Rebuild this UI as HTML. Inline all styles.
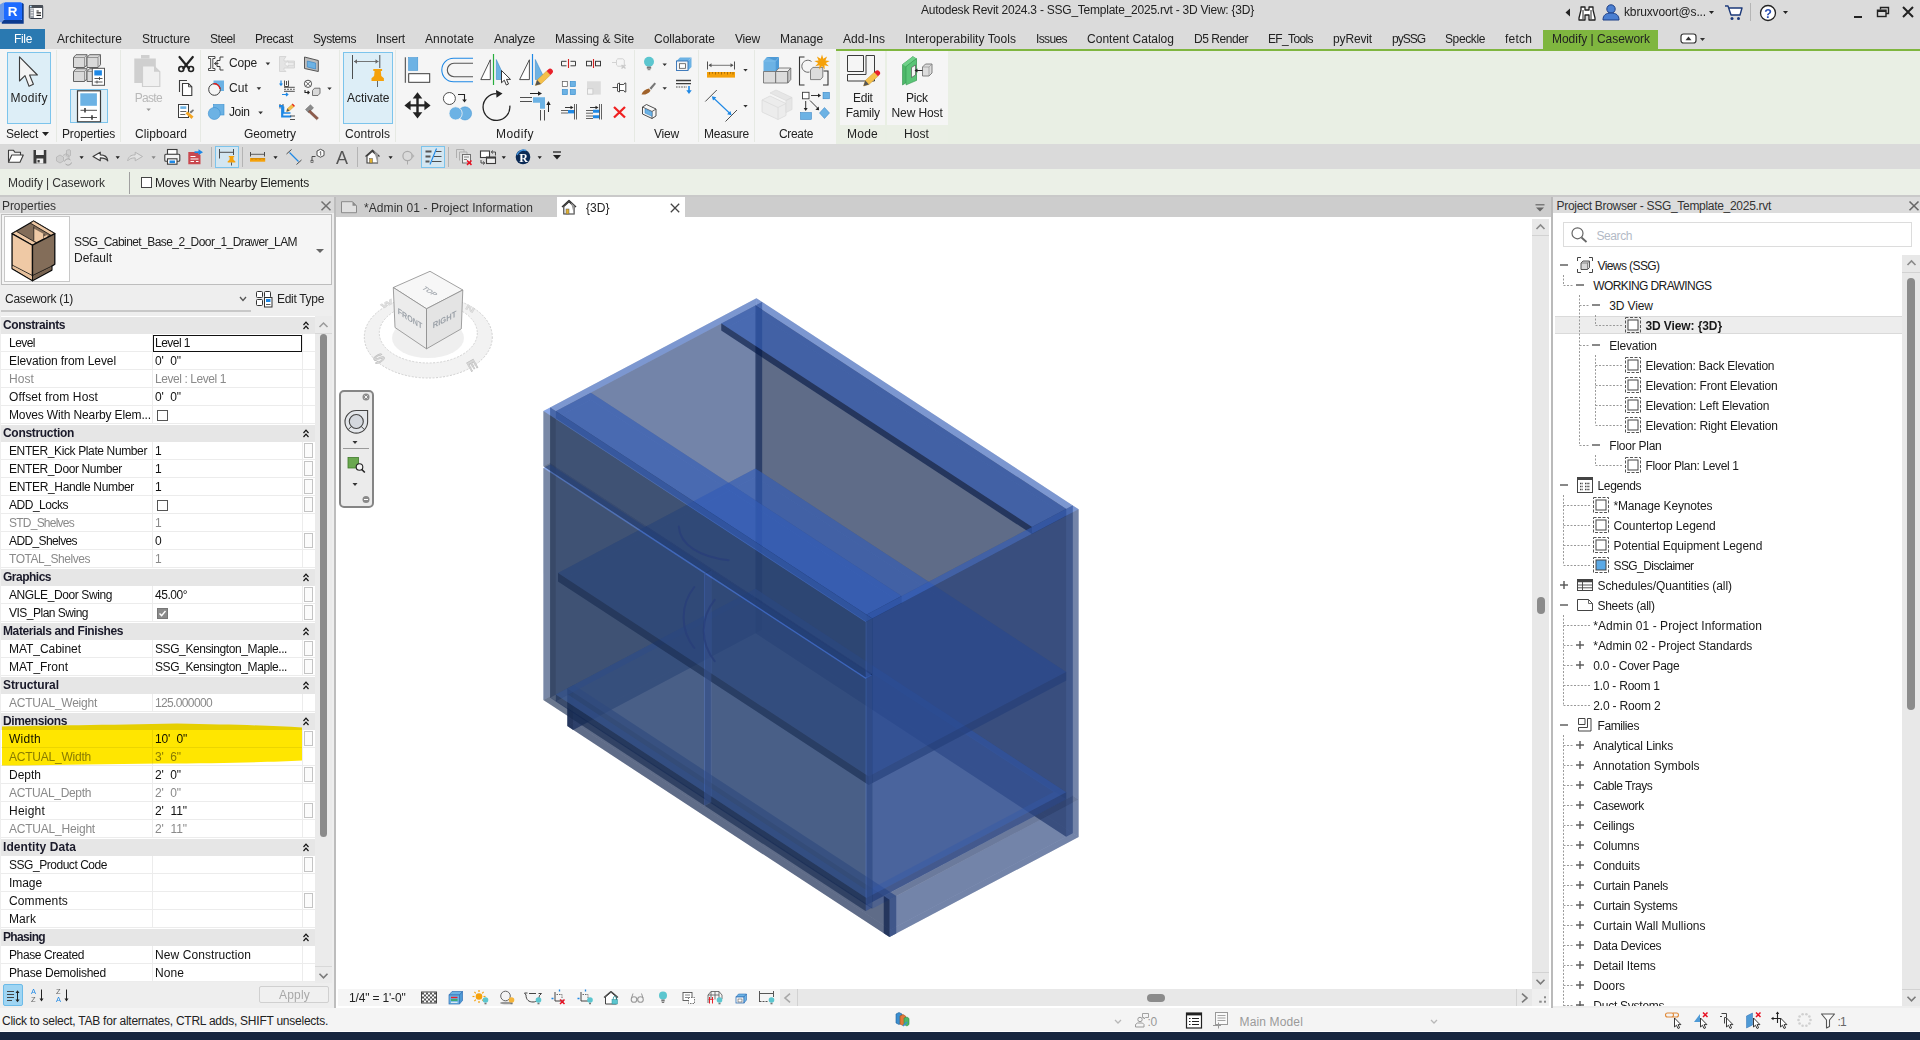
<!DOCTYPE html><html><head><meta charset="utf-8"><title>Autodesk Revit 2024.3</title><style>
html,body{margin:0;padding:0}
body{width:1920px;height:1040px;overflow:hidden;position:relative;background:#fff;font-family:"Liberation Sans",sans-serif;font-size:12px;color:#222}
body>div,body>span,body>svg{position:absolute}
.t{white-space:pre;line-height:16px;height:16px}
svg{overflow:visible}
#t1{letter-spacing:-0.235px}#t2{letter-spacing:-0.148px}#t3{letter-spacing:-0.336px}#t4{letter-spacing:0.081px}#t5{letter-spacing:-0.076px}#t6{letter-spacing:-0.472px}#t7{letter-spacing:-0.384px}#t8{letter-spacing:-0.431px}#t9{letter-spacing:-0.169px}#t10{letter-spacing:0.119px}#t11{letter-spacing:-0.243px}#t12{letter-spacing:-0.075px}#t13{letter-spacing:-0.034px}#t14{letter-spacing:-0.199px}#t15{letter-spacing:-0.062px}#t16{letter-spacing:0.092px}#t17{letter-spacing:0.053px}#t18{letter-spacing:-0.615px}#t19{letter-spacing:0.018px}#t20{letter-spacing:-0.448px}#t21{letter-spacing:-0.629px}#t22{letter-spacing:-0.145px}#t23{letter-spacing:-1.003px}#t24{letter-spacing:-0.386px}#t25{letter-spacing:0.197px}#t26{letter-spacing:-0.028px}#t27{letter-spacing:-0.227px}#t28{letter-spacing:-0.170px}#t29{letter-spacing:0.069px}#t30{letter-spacing:-0.086px}#t31{letter-spacing:0.039px}#t32{letter-spacing:0.443px}#t33{letter-spacing:-0.199px}#t34{letter-spacing:-0.241px}#t35{letter-spacing:-0.339px}#t36{letter-spacing:0.242px}#t37{letter-spacing:0.078px}#t38{letter-spacing:-0.087px}#t39{letter-spacing:-0.156px}#t40{letter-spacing:0.359px}#t41{letter-spacing:-0.677px}#t42{letter-spacing:-0.172px}#t43{letter-spacing:0.104px}#t44{letter-spacing:-0.379px}#t45{letter-spacing:-0.023px}#t46{letter-spacing:-0.247px}#t47{letter-spacing:-0.224px}#t48{letter-spacing:-0.243px}#t49{letter-spacing:-0.102px}#t50{letter-spacing:-0.070px}#t51{letter-spacing:-0.569px}#t52{letter-spacing:-0.004px}#t53{letter-spacing:-0.280px}#t54{letter-spacing:-0.312px}#t55{letter-spacing:-0.426px}#t56{letter-spacing:-0.537px}#t57{letter-spacing:-0.529px}#t58{letter-spacing:-0.087px}#t59{letter-spacing:-0.096px}#t60{letter-spacing:0.078px}#t61{letter-spacing:-0.426px}#t62{letter-spacing:0.116px}#t63{letter-spacing:-0.096px}#t64{letter-spacing:-0.135px}#t65{letter-spacing:-0.306px}#t66{letter-spacing:-0.379px}#t68{letter-spacing:-0.375px}#t70{letter-spacing:-0.336px}#t72{letter-spacing:-0.484px}#t73{letter-spacing:-0.761px}#t75{letter-spacing:-0.609px}#t77{letter-spacing:-0.457px}#t79{letter-spacing:-0.504px}#t80{letter-spacing:-0.399px}#t81{letter-spacing:-0.471px}#t82{letter-spacing:-0.504px}#t83{letter-spacing:-0.396px}#t84{letter-spacing:-0.044px}#t85{letter-spacing:-0.410px}#t86{letter-spacing:-0.014px}#t87{letter-spacing:-0.410px}#t88{letter-spacing:-0.069px}#t89{letter-spacing:-0.243px}#t90{letter-spacing:-0.641px}#t91{letter-spacing:-0.402px}#t92{letter-spacing:0.263px}#t93{letter-spacing:-0.179px}#t94{letter-spacing:-0.225px}#t95{letter-spacing:-0.096px}#t96{letter-spacing:-0.006px}#t97{letter-spacing:-0.096px}#t98{letter-spacing:-0.337px}#t99{letter-spacing:-0.096px}#t100{letter-spacing:0.219px}#t101{letter-spacing:-0.051px}#t102{letter-spacing:-0.209px}#t103{letter-spacing:-0.051px}#t104{letter-spacing:0.076px}#t105{letter-spacing:-0.463px}#t106{letter-spacing:-0.072px}#t107{letter-spacing:0.123px}#t108{letter-spacing:0.082px}#t109{letter-spacing:-0.670px}#t110{letter-spacing:-0.389px}#t111{letter-spacing:0.080px}#t112{letter-spacing:-0.233px}#t113{letter-spacing:0.078px}#t114{letter-spacing:0.194px}#t115{letter-spacing:0.073px}#t116{letter-spacing:0.035px}#t117{letter-spacing:-0.168px}#t118{letter-spacing:-0.298px}#t119{letter-spacing:-0.422px}#t120{letter-spacing:-0.588px}#t121{letter-spacing:-0.598px}#t122{letter-spacing:-0.153px}#t123{letter-spacing:-0.101px}#t124{letter-spacing:-0.208px}#t125{letter-spacing:-0.267px}#t126{letter-spacing:-0.183px}#t127{letter-spacing:-0.200px}#t128{letter-spacing:-0.175px}#t129{letter-spacing:-0.250px}#t130{letter-spacing:-0.372px}#t131{letter-spacing:-0.328px}#t132{letter-spacing:-0.166px}#t133{letter-spacing:-0.032px}#t134{letter-spacing:-0.078px}#t135{letter-spacing:-0.574px}#t136{letter-spacing:-0.090px}#t137{letter-spacing:-0.292px}#t138{letter-spacing:0.065px}#t139{letter-spacing:-0.084px}#t140{letter-spacing:-0.295px}#t141{letter-spacing:-0.240px}#t142{letter-spacing:-0.181px}#t143{letter-spacing:-0.396px}#t144{letter-spacing:-0.189px}#t145{letter-spacing:-0.027px}#t146{letter-spacing:-0.457px}#t147{letter-spacing:-0.357px}#t148{letter-spacing:-0.211px}#t149{letter-spacing:-0.194px}#t150{letter-spacing:-0.078px}#t151{letter-spacing:-0.283px}#t152{letter-spacing:-0.252px}#t153{letter-spacing:-0.001px}#t154{letter-spacing:-0.281px}#t155{letter-spacing:-0.072px}#t156{letter-spacing:-0.053px}#t157{letter-spacing:-0.251px}#t158{letter-spacing:-0.245px}#t159{letter-spacing:-0.258px}#t160{letter-spacing:0.147px}#t161{letter-spacing:-0.758px}</style></head><body>
<div style="left:0px;top:0px;width:1920px;height:49px;background:#dbdbdb;"></div>
<div style="left:0px;top:49px;width:836px;height:95px;background:#f5f5f5;"></div>
<div style="left:836px;top:49px;width:1084px;height:95px;background:#e9efe4;"></div>
<div style="left:836px;top:49px;width:1084px;height:2px;background:#7fb63f;"></div>
<div style="left:0px;top:144px;width:1920px;height:25px;background:#dadada;"></div>
<div style="left:0px;top:169px;width:1920px;height:27px;background:#ebf0e7;"></div>
<div style="left:0px;top:195px;width:1920px;height:2px;background:#c9c9c9;"></div>
<svg style="left:0px;top:0px;" width="24" height="25" viewBox="0 0 24 25"><path d="M0 4.500L3.800 2.300V20L1.800 22.200H0Z" fill="#6f9ce8"/><path d="M1.800 22.200L3.800 20H22V2.800L23.700 4V23.700H1.800Z" fill="#0b3a8f"/><rect x="3.800" y="2.200" width="18.300" height="17.800" rx="1.500" fill="#1e6bff"/><text x="12.700" y="15.800" font-family="Liberation Sans,sans-serif" font-weight="bold" font-size="13.500" text-anchor="middle" fill="#fff">R</text></svg>
<svg style="left:28px;top:4px;" width="16" height="16" viewBox="0 0 16 16"><rect x="1.300" y="1.500" width="13.400" height="13" rx="1.200" fill="#fff" stroke="#333a45" stroke-width="1"/><rect x="1" y="1.200" width="14" height="2.800" fill="#4a5058"/><rect x="2" y="1.800" width="1.600" height="1.500" fill="#bfe4ff"/><rect x="2" y="4.500" width="4" height="9.500" fill="#9aa0a8"/><path d="M2.700 6.200h2.600M2.700 8.700h2.600M2.700 11.200h2.600" stroke="#fff" stroke-width="0.900"/><path d="M8.500 7h2.200M8.500 8.900h4.500M8.500 11.300h4.500" stroke="#222" stroke-width="1.200"/></svg>
<span class="t" id="t1" style="left:921px;top:2px;color:#222;">Autodesk Revit 2024.3 - SSG_Template_2025.rvt - 3D View: {3D}</span>
<svg style="left:1565px;top:8px;" width="6" height="9" viewBox="0 0 6 9"><path d="M5 0.5V8.5L0.5 4.5Z" fill="#222"/></svg>
<svg style="left:1578px;top:4px;" width="18" height="17" viewBox="0 0 18 17"><path d="M3 3h4v3h4V3h4v3l2 8v2h-6v-5H7v5H1v-2l2-8z" fill="#fff" stroke="#222" stroke-width="1.3" stroke-linejoin="round"/><path d="M5 6v9M13 6v9" stroke="#222" stroke-width="1"/></svg>
<svg style="left:1602px;top:3px;" width="18" height="18" viewBox="0 0 18 18"><circle cx="9" cy="6" r="4.2" fill="#4b7fd1" stroke="#1d3f86" stroke-width="1"/><path d="M1 17c0-5 3-7 8-7s8 2 8 7z" fill="#4b7fd1" stroke="#1d3f86" stroke-width="1"/></svg>
<span class="t" id="t2" style="left:1624px;top:4px;color:#222;">kbruxvoort@s...</span>
<svg style="left:1709px;top:11px" width="5" height="3" viewBox="0 0 5 3"><path d="M0 0H5L2.5 3Z" fill="#222"/></svg>
<svg style="left:1724px;top:4px;" width="19" height="17" viewBox="0 0 19 17"><path d="M1 2h3l3 9h9l2-7H5" fill="#fff" stroke="#1d3a7a" stroke-width="1.4" stroke-linejoin="round"/><circle cx="8" cy="14.5" r="1.5" fill="#1d3a7a"/><circle cx="14.5" cy="14.5" r="1.5" fill="#1d3a7a"/></svg>
<div style="left:1750px;top:3px;width:1px;height:18px;background:#b5b5b5;"></div>
<svg style="left:1759px;top:4px;" width="18" height="18" viewBox="0 0 18 18"><circle cx="9" cy="9" r="7.5" fill="#fff" stroke="#222" stroke-width="1.3"/><text x="9" y="13.5" font-family="Liberation Sans,sans-serif" font-weight="bold" font-size="12.5" text-anchor="middle" fill="#2a4fb3">?</text></svg>
<svg style="left:1783px;top:11px" width="5" height="3" viewBox="0 0 5 3"><path d="M0 0H5L2.5 3Z" fill="#222"/></svg>
<div style="left:1854px;top:16px;width:8px;height:2px;background:#222;"></div>
<svg style="left:1876px;top:6px;" width="14" height="12" viewBox="0 0 14 12"><path d="M4.5 3.5V1.5H12.5V7.5H10" fill="none" stroke="#222" stroke-width="1.4"/><rect x="1.5" y="4.2" width="8.5" height="6.3" fill="none" stroke="#222" stroke-width="1.4"/><path d="M1.5 5.2h8.5" stroke="#222" stroke-width="1.6"/></svg>
<svg style="left:1902px;top:6px;" width="12" height="12" viewBox="0 0 12 12"><path d="M1 1L11 11M11 1L1 11" stroke="#222" stroke-width="2"/></svg>
<div style="left:0px;top:29px;width:45px;height:20px;background:#2a79b1;"></div>
<span class="t" id="t3" style="left:14px;top:30.5px;color:#fff;">File</span>
<span class="t" id="t4" style="left:57px;top:30.5px;color:#222;">Architecture</span>
<span class="t" id="t5" style="left:142px;top:30.5px;color:#222;">Structure</span>
<span class="t" id="t6" style="left:210px;top:30.5px;color:#222;">Steel</span>
<span class="t" id="t7" style="left:255px;top:30.5px;color:#222;">Precast</span>
<span class="t" id="t8" style="left:313px;top:30.5px;color:#222;">Systems</span>
<span class="t" id="t9" style="left:376px;top:30.5px;color:#222;">Insert</span>
<span class="t" id="t10" style="left:425px;top:30.5px;color:#222;">Annotate</span>
<span class="t" id="t11" style="left:494px;top:30.5px;color:#222;">Analyze</span>
<span class="t" id="t12" style="left:555px;top:30.5px;color:#222;">Massing &amp; Site</span>
<span class="t" id="t13" style="left:654px;top:30.5px;color:#222;">Collaborate</span>
<span class="t" id="t14" style="left:735px;top:30.5px;color:#222;">View</span>
<span class="t" id="t15" style="left:780px;top:30.5px;color:#222;">Manage</span>
<span class="t" id="t16" style="left:843px;top:30.5px;color:#222;">Add-Ins</span>
<span class="t" id="t17" style="left:905px;top:30.5px;color:#222;">Interoperability Tools</span>
<span class="t" id="t18" style="left:1036px;top:30.5px;color:#222;">Issues</span>
<span class="t" id="t19" style="left:1087px;top:30.5px;color:#222;">Content Catalog</span>
<span class="t" id="t20" style="left:1194px;top:30.5px;color:#222;">D5 Render</span>
<span class="t" id="t21" style="left:1268px;top:30.5px;color:#222;">EF_Tools</span>
<span class="t" id="t22" style="left:1333px;top:30.5px;color:#222;">pyRevit</span>
<span class="t" id="t23" style="left:1392px;top:30.5px;color:#222;">pySSG</span>
<span class="t" id="t24" style="left:1445px;top:30.5px;color:#222;">Speckle</span>
<span class="t" id="t25" style="left:1505px;top:30.5px;color:#222;">fetch</span>
<div style="left:1543px;top:30px;width:115px;height:20px;background:#7fb63f;"></div>
<span class="t" id="t26" style="left:1552px;top:30.5px;color:#222;">Modify | Casework</span>
<svg style="left:1680px;top:33px;" width="17" height="11" viewBox="0 0 17 11"><rect x="1" y="1" width="15" height="9" rx="2.5" fill="#fff" stroke="#333" stroke-width="1.2"/><path d="M5.5 7.2h6L8.5 3.6z" fill="#333"/></svg>
<svg style="left:1700px;top:38px" width="5" height="3" viewBox="0 0 5 3"><path d="M0 0H5L2.5 3Z" fill="#333"/></svg>
<div style="left:56px;top:50px;width:1px;height:92px;background:#e6e9e3;"></div>
<div style="left:120px;top:50px;width:1px;height:92px;background:#e6e9e3;"></div>
<div style="left:200px;top:50px;width:1px;height:92px;background:#e6e9e3;"></div>
<div style="left:339px;top:50px;width:1px;height:92px;background:#e6e9e3;"></div>
<div style="left:395px;top:50px;width:1px;height:92px;background:#e6e9e3;"></div>
<div style="left:634px;top:50px;width:1px;height:92px;background:#e6e9e3;"></div>
<div style="left:698px;top:50px;width:1px;height:92px;background:#e6e9e3;"></div>
<div style="left:754px;top:50px;width:1px;height:92px;background:#e6e9e3;"></div>
<div style="left:840px;top:51px;width:45px;height:74px;background:#f5f5f5;"></div>
<div style="left:840px;top:125px;width:45px;height:18px;background:#eaefe5;"></div>
<div style="left:887px;top:51px;width:60.5px;height:74px;background:#f5f5f5;"></div>
<div style="left:887px;top:125px;width:60.5px;height:18px;background:#eaefe5;"></div>
<span class="t" id="t27" style="left:6px;top:125.5px;color:#222;">Select</span>
<span class="t" id="t28" style="left:62px;top:125.5px;color:#222;">Properties</span>
<span class="t" id="t29" style="left:135px;top:125.5px;color:#222;">Clipboard</span>
<span class="t" id="t30" style="left:244px;top:125.5px;color:#222;">Geometry</span>
<span class="t" id="t31" style="left:345px;top:125.5px;color:#222;">Controls</span>
<span class="t" id="t32" style="left:496px;top:125.5px;color:#222;">Modify</span>
<span class="t" id="t33" style="left:654px;top:125.5px;color:#222;">View</span>
<span class="t" id="t34" style="left:704px;top:125.5px;color:#222;">Measure</span>
<span class="t" id="t35" style="left:779px;top:125.5px;color:#222;">Create</span>
<span class="t" id="t36" style="left:847px;top:125.5px;color:#222;">Mode</span>
<span class="t" id="t37" style="left:904px;top:125.5px;color:#222;">Host</span>
<svg style="left:42px;top:132px" width="7" height="4" viewBox="0 0 7 4"><path d="M0 0H7L3.5 4Z" fill="#222"/></svg>
<span class="t" id="t38" style="left:8px;top:174.5px;color:#333;">Modify | Casework</span>
<div style="left:129px;top:172px;width:1px;height:22px;background:#a0a0a0;"></div>
<div style="left:141px;top:177px;width:11px;height:11px;background:#fff;border:1px solid #444;box-sizing:border-box;"></div>
<span class="t" id="t39" style="left:155px;top:174.5px;color:#222;">Moves With Nearby Elements</span>
<div style="left:7px;top:52px;width:44px;height:72px;background:#ddeef7;border:1px solid #7cc4ec;box-sizing:border-box;"></div>
<div style="left:70px;top:89px;width:38px;height:34px;background:#ddeef7;border:1px solid #7cc4ec;box-sizing:border-box;"></div>
<div style="left:343px;top:52px;width:50px;height:72px;background:#ddeef7;border:1px solid #7cc4ec;box-sizing:border-box;"></div>
<svg style="left:0px;top:50px;" width="1920" height="95" viewBox="0 50 1920 95"><path d="M19.5 56.8V81L25 75.6L29 86.3L33.4 84.3L29.6 75H37.4Z" fill="#f4f4f4" stroke="#3c3c3c" stroke-width="1.1" stroke-linejoin="round"/><path d="M73.5 57.5l2.5-2.8h11v10l-2.5 2.8h-11z" fill="#d9d9d9" stroke="#555" stroke-width="0.9" stroke-linejoin="round"/><path d="M73.5 57.5h11v10M84.5 57.5l2.5-2.8" fill="none" stroke="#777" stroke-width="0.7"/><path d="M87 57.5l2.5-2.8h11v10l-2.5 2.8h-11z" fill="#d9d9d9" stroke="#555" stroke-width="0.9" stroke-linejoin="round"/><path d="M87 57.5h11v10M98 57.5l2.5-2.8" fill="none" stroke="#777" stroke-width="0.7"/><path d="M73.5 71.5l2.5-2.8h11v10l-2.5 2.8h-11z" fill="#d9d9d9" stroke="#555" stroke-width="0.9" stroke-linejoin="round"/><path d="M73.5 71.5h11v10M84.5 71.5l2.5-2.8" fill="none" stroke="#777" stroke-width="0.7"/><path d="M87 71.5l2.5-2.8h11v10l-2.5 2.8h-11z" fill="#d9d9d9" stroke="#555" stroke-width="0.9" stroke-linejoin="round"/><path d="M87 71.5h11v10M98 71.5l2.5-2.8" fill="none" stroke="#777" stroke-width="0.7"/><rect x="92.3" y="68.3" width="12.2" height="17" fill="#fff" stroke="#555" stroke-width="1"/><rect x="94.3" y="70.3" width="7.6" height="5.2" fill="#1e88e5"/><path d="M94.5 78.5h8M94.5 82h8M99.5 77v3M97 80.5v3" stroke="#444" stroke-width="0.9"/><rect x="77.5" y="90.8" width="23" height="31" fill="#fff" stroke="#3c3c3c" stroke-width="1.2"/><rect x="80.3" y="93.3" width="16.6" height="12.5" fill="#6cb2e4"/><path d="M80.5 110.3h16.5M80.5 117.5h16.5" stroke="#3c3c3c" stroke-width="0.9"/><path d="M85 108v4.6M92 115.2v4.6" stroke="#3c3c3c" stroke-width="1.6"/><path d="M134.3 58.5h21.5v24.5h-21.5z" fill="#cfcfcf"/><path d="M141 55h8.5v3.5h-8.5z" fill="#cfcfcf"/><path d="M142.5 66h11.5l5.8 5.8V86.5h-17.3z" fill="#f0f0f0" stroke="#cfcfcf" stroke-width="1.2"/><path d="M154 66v5.8h5.8z" fill="#cfcfcf"/><path d="M146.4 108.4h4.4l-2.2 2.6z" fill="#9a9a9a"/><path d="M179.5 57l9.5 11.5M192.8 57l-9.5 11.5" stroke="#222" stroke-width="2.2" stroke-linecap="round"/><circle cx="181.3" cy="69" r="2.5" fill="none" stroke="#222" stroke-width="1.6"/><circle cx="191" cy="69" r="2.5" fill="none" stroke="#222" stroke-width="1.6"/><path d="M179.5 92V80.5h7.5" fill="none" stroke="#3c3c3c" stroke-width="1.1"/><path d="M182.5 83.5h6l3.3 3.3V95.5h-9.3z" fill="#fff" stroke="#3c3c3c" stroke-width="1.1"/><path d="M188.5 83.5v3.3h3.3" fill="none" stroke="#3c3c3c" stroke-width="0.9"/><rect x="178.5" y="104.5" width="10" height="13" fill="#fff" stroke="#3c3c3c" stroke-width="1"/><rect x="180.3" y="106.3" width="6" height="2.6" fill="#6cb2e4"/><path d="M180.3 111.5h6M180.3 114.5h5" stroke="#3c3c3c" stroke-width="0.8"/><path d="M185.5 113.5l6 5.5 2-2.4-6-5z" fill="#f5a623"/><path d="M189.5 112l3.5-2.8 1 1.2-3 3z" fill="#777"/><path d="M208.5 56.5h6.5v2h-2.2v10h2.2v2h-6.5v-2h2.2v-10h-2.2z" fill="#fff" stroke="#3c3c3c" stroke-width="0.9"/><path d="M223.5 57h-3.5v3.5h-3v6h3V70h3.5" fill="none" stroke="#3c3c3c" stroke-width="1"/><path d="M214.5 63.5h4M216.2 62l-1.8 1.5 1.8 1.5" fill="none" stroke="#3c3c3c" stroke-width="0.9"/><rect x="213.5" y="80.5" width="10.5" height="10.5" fill="#6cb2e4"/><circle cx="214.5" cy="89.5" r="5.8" fill="#f5f5f5" stroke="#3c3c3c" stroke-width="1"/><path d="M213.5 83.8a5.8 5.8 0 0 1 6.5 5" fill="none" stroke="#e02020" stroke-width="1.4"/><rect x="213.5" y="104.5" width="10.5" height="10.5" fill="#6cb2e4" stroke="#3a8fd0" stroke-width="0.6"/><circle cx="214.3" cy="113.5" r="6" fill="#6cb2e4" stroke="#3a8fd0" stroke-width="0.6"/><path d="M279.5 56.5h6.5l-2 3v1.5h10.5v7H284v1.5l2 2h-6.5z" fill="#e4e4e4" stroke="#d0d0d0" stroke-width="0.8"/><path d="M284.5 64l3.5-3.2v2h6v2.4h-6v2z" fill="#f5f5f5" stroke="#d0d0d0" stroke-width="0.8"/><path d="M304.5 57l13.8 3.5v11L304.5 68.5z" fill="#bdbdbd" stroke="#555" stroke-width="1" stroke-linejoin="round"/><path d="M307.3 61l8.3 2v6l-8.3-2z" fill="#6cb2e4" stroke="#2f7fc2" stroke-width="0.6"/><path d="M281 80.5v4.5M279.6 83.5l1.4 1.8 1.4-1.8" fill="none" stroke="#1e88e5" stroke-width="1.2"/><path d="M284.5 80.5v6h4v-6M286.5 81v4" fill="none" stroke="#3c3c3c" stroke-width="0.9"/><path d="M284 87.3h10.8M284 91.3h10.8" stroke="#3c3c3c" stroke-width="0.9"/><path d="M284 89.3h10.8" stroke="#3c3c3c" stroke-width="0.8" stroke-dasharray="2 1"/><path d="M282 94.5h5.5M286 93l1.8 1.5-1.8 1.5" fill="none" stroke="#1e88e5" stroke-width="1.2"/><circle cx="308" cy="83.8" r="3.6" fill="#fff" stroke="#3c3c3c" stroke-width="0.9"/><path d="M305.6 81.4l4.8 4.8M310.4 81.4l-4.8 4.8" stroke="#3c3c3c" stroke-width="0.8"/><path d="M305 90v2.5h4M307.6 91l1.6 1.5-1.6 1.5" fill="none" stroke="#222" stroke-width="1.1"/><path d="M312.5 90.5l2-2.3h5.5v5l-2 2.3h-5.5z" fill="#d9d9d9" stroke="#555" stroke-width="0.8"/><path d="M327.3 87.4h4.4l-2.2 2.6z" fill="#333"/><path d="M280 104v4.5M283 104v4.5" stroke="#3c3c3c" stroke-width="0.9"/><path d="M279 106h3.2v10.5h9" fill="none" stroke="#1e88e5" stroke-width="2.2"/><path d="M283.5 106.5v6.5h7" fill="none" stroke="#1e88e5" stroke-width="1.6"/><path d="M290 116h5M290 119.5h5" stroke="#3c3c3c" stroke-width="0.9"/><path d="M286.5 111.5l1-3 5.2-4.7 2 2.2-5.2 4.7z" fill="#f5c04a" stroke="#c58a1a" stroke-width="0.4"/><path d="M291.8 104.6l1-0.9 2 2.2-1 0.9z" fill="#e8202a"/><path d="M286.5 111.5l1-3 2 2.2z" fill="#555"/><path d="M305.5 109.5l5-4.8 3 3.2-5 4.8z" fill="#8a8a8a" stroke="#666" stroke-width="0.5"/><path d="M310 110l8.5 8-1.8 1.8-8.5-8z" fill="#8d5a4a" stroke="#6a3f33" stroke-width="0.4"/><path d="M265.6 62.5h4.6l-2.3 2.7z" fill="#333"/><path d="M256.6 87.2h4.6l-2.3 2.7z" fill="#333"/><path d="M258.3 111.5h4.6l-2.3 2.7z" fill="#333"/><path d="M352.5 55v24M379.8 55v13" stroke="#3c3c3c" stroke-width="0.9"/><path d="M354 61.5h24.5" stroke="#666" stroke-width="0.9"/><path d="M357 59.3l-3 2.2 3 2.2zM375.5 59.3l3 2.2-3 2.2z" fill="#666"/><path d="M373.3 69h8.8v2h-1.3l0.5 5 2.6 2.3v2.7h-12.4v-2.7l2.6-2.3 0.5-5h-1.3z" fill="#f5a10a"/><path d="M377.5 81v6" stroke="#555" stroke-width="0.9"/><path d="M405.3 57.3v25.5" stroke="#3c3c3c" stroke-width="1"/><rect x="408.5" y="57.5" width="9.3" height="13" fill="#6cb2e4" stroke="#3a8fd0" stroke-width="0.5"/><rect x="408.7" y="73.7" width="21" height="8.6" fill="#fff" stroke="#3c3c3c" stroke-width="1"/><path d="M473 58.3h-19.5a11.7 11.7 0 0 0 0 23.4H473" fill="none" stroke="#1e88e5" stroke-width="1.1"/><path d="M473 63.3h-19a6.7 6.7 0 0 0 0 13.4H473" fill="none" stroke="#555" stroke-width="1.1"/><path d="M490.3 59.8v19.8h-9.5z" fill="#fff" stroke="#3c3c3c" stroke-width="0.9" stroke-linejoin="round"/><path d="M493.5 54v31" stroke="#27ae3c" stroke-width="1.2"/><path d="M496.3 59.5v20h9.3z" fill="#6cb2e4" stroke="#2f7fc2" stroke-width="0.5"/><path d="M501.5 70.5v12.3l2.8-2.6 2 4.8 2.2-1-2-4.6h4z" fill="#fff" stroke="#222" stroke-width="0.9" stroke-linejoin="round"/><path d="M529.4 59.8v19.8h-9.8z" fill="#fff" stroke="#3c3c3c" stroke-width="0.9" stroke-linejoin="round"/><path d="M532.5 54v31" stroke="#1e88e5" stroke-width="1.2"/><path d="M535.3 59.5v20h9.7z" fill="#6cb2e4" stroke="#2f7fc2" stroke-width="0.5"/><path d="M535.3 85.5l1.8-5.5 9.5-9 3.8 4-9.5 9z" fill="#f5c04a" stroke="#c58a1a" stroke-width="0.4"/><path d="M546.6 71l1.6-1.5a2.7 2.7 0 0 1 3.8 4l-1.6 1.5z" fill="#e8202a"/><path d="M535.3 85.5l1.8-5.5 3.8 4z" fill="#555"/><path d="M417.5 92.3l4.8 6.2h-3.6v5.7h5.7v-3.6l6.2 4.8-6.2 4.8v-3.6h-5.7v5.7h3.6l-4.8 6.2-4.8-6.2h3.6v-5.7h-5.7v3.6l-6.2-4.8 6.2-4.8v3.6h5.7v-5.7h-3.6z" fill="#222"/><circle cx="449.4" cy="98.5" r="6" fill="#fff" stroke="#3c3c3c" stroke-width="0.9"/><path d="M458 94.5h6.5v6" fill="none" stroke="#222" stroke-width="1.1"/><path d="M462.2 99.5h4.6l-2.3 3z" fill="#222"/><circle cx="465" cy="113.4" r="6.6" fill="#6cb2e4" stroke="#3a8fd0" stroke-width="0.5"/><circle cx="455.6" cy="113.4" r="6.6" fill="#6cb2e4" stroke="#f5f5f5" stroke-width="0.8"/><path d="M496.5 93.6a13.4 13.4 0 1 0 13.3 12" fill="none" stroke="#222" stroke-width="1.3"/><path d="M496 90l6.5 3.5-6 4.2z" fill="#222"/><path d="M520 97.5h12M520 101.5h12" stroke="#3c3c3c" stroke-width="0.9"/><path d="M533 97.3h12v11.5h-5v-6h-7z" fill="#6cb2e4"/><path d="M540.5 110v10.5M544.5 110v10.5" stroke="#3c3c3c" stroke-width="0.9"/><path d="M530 93.5h9" stroke="#222" stroke-width="1"/><path d="M538 91.3l4 2.2-4 2.2z" fill="#222"/><path d="M548.5 112v-8" stroke="#222" stroke-width="1"/><path d="M546.3 105l2.2-4 2.2 4z" fill="#222"/><path d="M566.5 61.3h-5v4.5h5M570.5 61.3h5v4.5h-5" fill="none" stroke="#3c3c3c" stroke-width="1"/><path d="M568.5 59v9" stroke="#d32020" stroke-width="1.1"/><rect x="586.5" y="61.3" width="5" height="4.5" fill="none" stroke="#3c3c3c" stroke-width="1"/><rect x="595.5" y="61.3" width="5" height="4.5" fill="none" stroke="#3c3c3c" stroke-width="1"/><path d="M593.5 59v9" stroke="#d32020" stroke-width="1.1"/><path d="M612 62.5h4M616.5 60l1.3-1.2h5l1.5 1.2v5l-1.5 1.2h-5l-1.3-1.2z" fill="none" stroke="#cfcfcf" stroke-width="0.9"/><path d="M621.5 65l4 3.6M625.5 65l-4 3.6" stroke="#c8c8c8" stroke-width="1.3"/><rect x="562.3" y="81.5" width="5" height="5" fill="#fff" stroke="#555" stroke-width="0.7"/><rect x="570.3" y="81.5" width="5" height="5" fill="#6cb2e4" stroke="#3a8fd0" stroke-width="0.7"/><rect x="562.3" y="89.6" width="5" height="5" fill="#6cb2e4" stroke="#3a8fd0" stroke-width="0.7"/><rect x="570.3" y="89.6" width="5" height="5" fill="#6cb2e4" stroke="#3a8fd0" stroke-width="0.7"/><rect x="587" y="81.3" width="13.8" height="13.3" fill="#dcdcdc"/><rect x="587.6" y="88.8" width="5.3" height="5.3" fill="#f5f5f5" stroke="#c8c8c8" stroke-width="0.8"/><path d="M612.5 87.5h5" stroke="#3c3c3c" stroke-width="0.9"/><path d="M617.5 83.8l2-0.8v9l-2-0.8zM619.5 84.5h4.3l1-1.5h1v9h-1l-1-1.5h-4.3z" fill="#fff" stroke="#3c3c3c" stroke-width="0.9" stroke-linejoin="round"/><path d="M561 110.5h7M561 113h7" stroke="#3c3c3c" stroke-width="0.8"/><path d="M568 110h6.5v3.4H568z" fill="#1e88e5"/><path d="M574.5 104v15.5M576.5 104v15.5" stroke="#3c3c3c" stroke-width="0.8"/><path d="M565 107.5h6" stroke="#222" stroke-width="0.9"/><path d="M570.5 105.7l3 1.8-3 1.8z" fill="#222"/><path d="M586 110.5h7M586 113.2h7M586 116h7M586 118.5h7" stroke="#3c3c3c" stroke-width="0.8"/><path d="M593 109.8h6.5v3H593zM593 115.2h6.5v3H593z" fill="#1e88e5"/><path d="M599.5 104v15.5M601.5 104v15.5" stroke="#3c3c3c" stroke-width="0.8"/><path d="M590 107.5h6" stroke="#222" stroke-width="0.9"/><path d="M595.5 105.7l3 1.8-3 1.8z" fill="#222"/><path d="M614 107l11 10.5M625 107l-11 10.5" stroke="#f02020" stroke-width="2.3"/><circle cx="649" cy="61.8" r="5" fill="#5cc6cf"/><path d="M646.8 66.5h4.4v2.2h-4.4z" fill="#777"/><path d="M647.6 69.2h2.8v1h-2.8z" fill="#777"/><path d="M662.5 63.4h4.4l-2.2 2.6zM662.5 87.2h4.4l-2.2 2.6z" fill="#333"/><path d="M676.5 61l3.5-3.5h11.5l-3.5 3.5z" fill="#6cb2e4"/><path d="M688 61l3.5-3.5v9.5l-3.5 3.5z" fill="#6cb2e4"/><rect x="676.5" y="61" width="11.5" height="9.5" fill="none" stroke="#2f6fb5" stroke-width="0.9"/><rect x="679.5" y="63.7" width="6" height="4.6" fill="#fff" stroke="#555" stroke-width="0.8"/><path d="M641.5 94.5c1-3.5 4-5.5 7.5-6l1.5 2.2c-2 2.8-5 4.3-9 3.8z" fill="#a0622a"/><path d="M649.5 88l5-5.5 1.5 1.3-4.8 6z" fill="#777"/><path d="M676 80.5h15M676 83.6h15" stroke="#3c3c3c" stroke-width="1.3"/><path d="M676 87h11" stroke="#3c3c3c" stroke-width="0.9" stroke-dasharray="1.6 1"/><path d="M689 86v6" stroke="#1e88e5" stroke-width="1.6"/><path d="M686.3 90.3h5.4l-2.7 3.7z" fill="#1e88e5"/><path d="M642.5 107l4-2.5 9.5 4.5v7l-4 2.5-9.5-4.5z" fill="none" stroke="#3c3c3c" stroke-width="0.9"/><path d="M642.5 107l9.5 4.5v7M652 111.500l4-2.5" fill="none" stroke="#3c3c3c" stroke-width="0.8"/><path d="M645 108.800l7 3.2v4.300l-7-3.2z" fill="#6cb2e4" stroke="#2f7fc2" stroke-width="0.5"/><path d="M707.5 61.5v8M734.5 61.5v8" stroke="#3c3c3c" stroke-width="0.9"/><path d="M709 65.3h24" stroke="#555" stroke-width="0.8"/><path d="M711.500 63.300l-3 2 3 2zM730.500 63.300l3 2-3 2z" fill="#555"/><rect x="707" y="72" width="28" height="5.600" fill="#f5a10a"/><path d="M709.500 72v2.500M712.500 72v1.600M715.500 72v2.500M718.500 72v1.600M721.500 72v2.500M724.500 72v1.600M727.500 72v2.500M730.500 72v1.600M733 72v2.500" stroke="#7a4a00" stroke-width="0.6"/><path d="M743.300 69h4.400l-2.200 2.600zM743.300 105h4.400l-2.200 2.600z" fill="#333"/><path d="M705.300 101.500l11.500-11.500M725.500 121.500l11.500-11.500" stroke="#3c3c3c" stroke-width="0.9"/><path d="M713 97.500l17.500 16.500" stroke="#1e88e5" stroke-width="1.1"/><path d="M711.800 96.300l4.500 1-3.300 3.200zM731.600 115.200l-4.500-1 3.300-3.200z" fill="#1e88e5"/><path d="M763.500 61l3.300-4h12.200v10.500l-3.300 4h-12.200z" fill="#6cb2e4"/><path d="M766.800 57h12.200v10.500l-3.300 4v-10.500z" fill="#4e9ad6"/><path d="M763.500 61h12.200l3.300-4" fill="none" stroke="#8ec6ee" stroke-width="0.6"/><path d="M763.500 71.500h12.200v11.500h-12.200z" fill="#dcdcdc" stroke="#666" stroke-width="0.8"/><path d="M775.700 71.500l3.300-3.500h11.800l-3 3.500z" fill="#ededed" stroke="#666" stroke-width="0.8"/><path d="M775.700 71.500h12.100v11.500h-12.100z" fill="#dcdcdc" stroke="#666" stroke-width="0.8"/><path d="M787.800 71.500l3-3.500v11.500l-3 3.500z" fill="#c8c8c8" stroke="#666" stroke-width="0.8"/><path d="M804.500 57h-5v28h5M823.500 71h4.500v14h-5" fill="none" stroke="#333" stroke-width="1.1"/><path d="M811.500 61.500a6 6 0 1 0 -2 10.500" fill="none" stroke="#666" stroke-width="1"/><path d="M810.500 70l2.300-2.600h10v9.600l-2.300 2.600h-10z" fill="#dcdcdc" stroke="#666" stroke-width="0.8"/><path d="M822 54.500l1.300 4.200 3.800-2.300-1.700 4 4.400 0.700-4 1.800 3 3.300-4.300-1 0.200 4.400-2.700-3.500-2.700 3.500 0.200-4.400-4.300 1 3-3.300-4-1.800 4.400-0.700-1.700-4 3.800 2.300z" fill="#f5a10a"/><path d="M762 100l8-4 16 7.500v12l-8 4-16-7.500z" fill="#ececec" stroke="#dadada" stroke-width="0.8"/><path d="M770 93l16 7.500 6-3-16-7.500zM786 100.500v12l6-3v-12z" fill="#e6e6e6" stroke="#dadada" stroke-width="0.7"/><path d="M762 100l16 7.500v12M778 107.500l8-4" fill="none" stroke="#dadada" stroke-width="0.8"/><rect x="802.500" y="92.300" width="6.500" height="6.500" fill="#fff" stroke="#3c3c3c" stroke-width="0.9"/><rect x="823" y="92.300" width="6.500" height="6.500" fill="#6cb2e4" stroke="#2f7fc2" stroke-width="0.5"/><rect x="800.500" y="112.500" width="11" height="7" fill="#6cb2e4" stroke="#2f7fc2" stroke-width="0.5"/><path d="M824.500 107.500l5 5.500-5 5.500-5-5.500z" fill="#6cb2e4" stroke="#2f7fc2" stroke-width="0.5"/><path d="M811 95.500h8M805.700 101v8M810 100.500l7.500 7.500" stroke="#222" stroke-width="0.9"/><path d="M818 93.500l3 2-3 2zM803.700 108h4l-2 3zM815.400 109.800l3.700 0.400-0.400-3.700z" fill="#222"/><path d="M847.500 55.500h16v16h-16z" fill="#f5f5f5" stroke="#3c3c3c" stroke-width="1"/><path d="M866 55.500h8.500V81h-27v-6.500H866z" fill="#f5f5f5" stroke="#3c3c3c" stroke-width="1" stroke-linejoin="round"/><path d="M863.500 86l1.800-5.500 9-8.300 3.700 4-9 8.300z" fill="#f5c04a" stroke="#c58a1a" stroke-width="0.400"/><path d="M874.300 72.200l1.200-1.100a2.700 2.700 0 0 1 3.700 4l-1.200 1.100z" fill="#e8202a"/><path d="M863.500 86l1.800-5.500 3.700 4z" fill="#555"/><path d="M902.500 64.500l10.500-8v22l-10.500 6.500z" fill="#4cb868" stroke="#2f8f49" stroke-width="0.6"/><path d="M913 56.500l3.500 2v22l-3.500-2z" fill="#2f8f49"/><path d="M902.500 64.500l10.500-8 3.500 2-10.500 8z" fill="#6fd088"/><path d="M906 66.500l10.500-8v22l-10.500 4.500z" fill="#5ac476" stroke="#2f8f49" stroke-width="0.5"/><path d="M911.500 67.500l4-2.500v10l-4 2.500z" fill="#f5f5f5" stroke="#555" stroke-width="0.7"/><path d="M922.500 67l3-3h6.500v9l-3 3h-6.500z" fill="#dcdcdc" stroke="#666" stroke-width="0.8"/><path d="M922.500 67h6.500v9M929 67l3-3" fill="none" stroke="#888" stroke-width="0.6"/><path d="M915 70.500h7.500" stroke="#222" stroke-width="1"/><path d="M917.500 68.500l-3 2 3 2z" fill="#222"/></svg>
<span class="t" id="t40" style="left:10.4px;top:90px;color:#222;">Modify</span>
<span class="t" id="t41" style="left:134.7px;top:90px;color:#b8b8b8;">Paste</span>
<span class="t" id="t42" style="left:229px;top:55px;color:#222;">Cope</span>
<span class="t" id="t43" style="left:229px;top:79.5px;color:#222;">Cut</span>
<span class="t" id="t44" style="left:229px;top:103.5px;color:#222;">Join</span>
<span class="t" id="t45" style="left:347px;top:90px;color:#222;">Activate</span>
<span class="t" id="t46" style="left:853px;top:90px;color:#222;">Edit</span>
<span class="t" id="t47" style="left:845.7px;top:105px;color:#222;">Family</span>
<span class="t" id="t48" style="left:906px;top:90px;color:#222;">Pick</span>
<span class="t" id="t49" style="left:891.5px;top:105px;color:#222;">New Host</span>
<div style="left:215px;top:146px;width:24px;height:22px;background:#d3e6f1;border:1px solid #7cc4ec;box-sizing:border-box;"></div>
<div style="left:421px;top:146px;width:24px;height:22px;background:#d3e6f1;border:1px solid #7cc4ec;box-sizing:border-box;"></div>
<div style="left:211px;top:147px;width:1px;height:20px;background:#b4b4b4;"></div>
<div style="left:242px;top:147px;width:1px;height:20px;background:#b4b4b4;"></div>
<div style="left:357px;top:147px;width:1px;height:20px;background:#b4b4b4;"></div>
<div style="left:448px;top:147px;width:1px;height:20px;background:#b4b4b4;"></div>
<svg style="left:0px;top:143px;" width="1920" height="27" viewBox="0 143 1920 27"><path d="M8.500 162.300V150.300h5l1.500 2h5.500v3" fill="#f0f0f0" stroke="#3c3c3c" stroke-width="1.100" stroke-linejoin="round"/><path d="M8.500 162.300l3.300-7.300h11.500l-3.300 7.300z" fill="#fff" stroke="#3c3c3c" stroke-width="1.100" stroke-linejoin="round"/><path d="M33.500 150h12.800v13.500h-12.800z" fill="#3c3c3c"/><rect x="36" y="150" width="7.800" height="5" fill="#f0f0f0"/><rect x="36.500" y="158.500" width="6.800" height="5" fill="#f0f0f0"/><rect x="37.500" y="160" width="2.200" height="2.500" fill="#3c3c3c"/><path d="M56.500 157l3.500-2 3.500 2v4l-3.500 2-3.500-2zM63 155.500l3-1.800 3 1.800v3.500M66.500 150.500c1.800-1 3.800-1 4 0v5c-0.500 1-3.500 1-4 0z" fill="#cfcfcf" stroke="#b0b0b0" stroke-width="0.700"/><path d="M64.500 161.500a3.500 3.500 0 0 1 6-1.500M71.500 162.500a3.500 3.500 0 0 1-6 1.500" fill="none" stroke="#a8a8a8" stroke-width="1"/><path d="M93 156.500l7.300-4.300v2.700c4.500 0 7 2 7.500 6-1.800-2.300-4-3-7.500-3v2.900z" fill="#f4f4f4" stroke="#3c3c3c" stroke-width="1.100" stroke-linejoin="round"/><path d="M142.500 156.500l-7.300-4.300v2.700c-4.500 0-7 2-7.500 6 1.800-2.300 4-3 7.500-3v2.900z" fill="#e2e2e2" stroke="#b5b5b5" stroke-width="1" stroke-linejoin="round"/><rect x="167.500" y="149.500" width="9.500" height="5" fill="#fff" stroke="#3c3c3c" stroke-width="1.100"/><rect x="164.800" y="154.300" width="15" height="7" rx="1" fill="#f4f4f4" stroke="#3c3c3c" stroke-width="1.100"/><rect x="167.500" y="158.800" width="9.500" height="5.400" fill="#fff" stroke="#3c3c3c" stroke-width="1.100"/><rect x="169.500" y="160.500" width="5.500" height="2.600" fill="#1e88e5"/><path d="M188.300 152h8.500l3.700 3v9.300h-12.200z" fill="#c9484f"/><path d="M190.500 156.500h5M190.500 159h8M190.500 161.500h3.500M196 161.500h2.500" stroke="#fff" stroke-width="1.200"/><path d="M194.500 152.200h5" stroke="#1e88e5" stroke-width="1.800"/><path d="M198.500 149.300l4.500 2.900-4.500 2.900z" fill="#1e88e5"/><path d="M219.500 149v9.500M233.500 149v6" stroke="#3c3c3c" stroke-width="0.900"/><path d="M220 152.300h13" stroke="#3c3c3c" stroke-width="0.900"/><path d="M228.800 156h5.400v1.300h-0.900l0.300 2.600 1.700 1.400v1.200h-7.600v-1.200l1.700-1.400 0.300-2.600h-0.900z" fill="#f5a10a"/><path d="M231.500 162.500v3" stroke="#444" stroke-width="0.900"/><path d="M250.500 152v4.500M264.500 152v4.500" stroke="#3c3c3c" stroke-width="0.900"/><path d="M251 154.300h13" stroke="#3c3c3c" stroke-width="0.800"/><rect x="250" y="158" width="15.200" height="3.700" fill="#f5a10a"/><path d="M252 158v1.700M254 158v1.200M256 158v1.700M258 158v1.200M260 158v1.700M262 158v1.200M264 158v1.700" stroke="#7a4a00" stroke-width="0.500"/><path d="M286.500 154l5-4.500M296.500 164.500l5-4.500" stroke="#3c3c3c" stroke-width="0.900"/><path d="M289.500 152.500l9 9" stroke="#1e88e5" stroke-width="1.200"/><path d="M312 160.500v-4h3.500" fill="none" stroke="#3c3c3c" stroke-width="0.900"/><rect x="311" y="160.300" width="2" height="2" fill="#fff" stroke="#3c3c3c" stroke-width="0.700"/><path d="M317 151l3.500-1.700 3.500 1.700v4.500l-3.500 1.700-3.500-1.700z" fill="#fff" stroke="#3c3c3c" stroke-width="0.900"/><path d="M319.700 152.200l1-0.600v4" fill="none" stroke="#3c3c3c" stroke-width="0.800"/><text x="336" y="163.500" font-family="Liberation Sans,sans-serif" font-size="18" fill="#555">A</text><path d="M365.500 156.500l7-6.300 7 6.300" fill="none" stroke="#3c3c3c" stroke-width="1.300" stroke-linejoin="round"/><path d="M367 156v7h10.500v-7l-5.200-4.700z" fill="#fff" stroke="#3c3c3c" stroke-width="1.100"/><path d="M374 150.800l4 3.500v8.700h-0.600z" fill="#999"/><rect x="369.500" y="158.500" width="3" height="4.500" fill="#e0b030" stroke="#555" stroke-width="0.500"/><circle cx="407.500" cy="156" r="4.600" fill="none" stroke="#aaa" stroke-width="1.200"/><path d="M411.500 153l3 3-3 3z" fill="#b5b5b5"/><path d="M407.500 160.500v4" stroke="#aaa" stroke-width="1"/><path d="M425.500 151.500h6M425.500 156.500h5M425.500 161.500h4" stroke="#555" stroke-width="2.200"/><path d="M436 151.500h5.500M434 156.500h7.500M432 161.500h9.500" stroke="#3c3c3c" stroke-width="0.900"/><path d="M436.500 148.500l-6.500 16" stroke="#1e88e5" stroke-width="1.100"/><path d="M456.500 158v-8.500h7.500v2.500M459.500 160.500v-8.500h7.500v2.500" fill="none" stroke="#aaa" stroke-width="0.900"/><rect x="462.500" y="154.500" width="8" height="8.500" fill="#f0f0f0" stroke="#666" stroke-width="0.900"/><path d="M464 157h5M464 159.500h3" stroke="#666" stroke-width="0.800"/><path d="M467 160.500l4.500 4.300M471.500 160.500l-4.500 4.300" stroke="#e81123" stroke-width="1.600"/><rect x="480.500" y="151" width="9" height="6.500" fill="#fff" stroke="#3c3c3c" stroke-width="1.100"/><rect x="486.500" y="157" width="9" height="6.500" fill="#f0f0f0" stroke="#3c3c3c" stroke-width="1.100"/><path d="M486.500 157.800h9" stroke="#3c3c3c" stroke-width="1.600"/><path d="M491.500 152h4v3.500M493 150.500l-1.800 1.500 1.800 1.500" fill="none" stroke="#3c3c3c" stroke-width="0.900"/><path d="M481 160v3h3.500M483 161.500l1.800 1.500-1.800 1.500" fill="none" stroke="#3c3c3c" stroke-width="0.900"/><circle cx="523" cy="157" r="7.300" fill="#0b2a55"/><path d="M517 155a7 7 0 0 1 9-4.500" fill="none" stroke="#3f8ed8" stroke-width="1.500"/><text x="519.300" y="162" font-family="Liberation Serif,serif" font-weight="bold" font-size="12" fill="#fff">R</text><path d="M553 152h8" stroke="#222" stroke-width="1.300"/><path d="M553 155h8l-4 4.500z" fill="#222"/><path d="M79.5 156.300h4.200l-2.100 2.700z" fill="#222"/><path d="M115.6 156.300h4.200l-2.100 2.700z" fill="#222"/><path d="M273.4 156.300h4.200l-2.100 2.700z" fill="#222"/><path d="M388.5 156.300h4.200l-2.100 2.700z" fill="#222"/><path d="M501.7 156.300h4.200l-2.100 2.700z" fill="#222"/><path d="M537.6 156.300h4.200l-2.100 2.700z" fill="#222"/><path d="M151.500 156.300h4.200l-2.100 2.700z" fill="#888"/></svg>
<div style="left:0px;top:197px;width:334px;height:811px;background:#eeeeee;"></div>
<div style="left:334px;top:197px;width:2px;height:811px;background:#bdbdbd;"></div>
<div style="left:0px;top:197px;width:334px;height:16px;background:#d9d9d9;"></div>
<span class="t" id="t50" style="left:2px;top:197.5px;color:#333;">Properties</span>
<svg style="left:321px;top:201px;" width="10" height="10" viewBox="0 0 10 10"><path d="M0.500 0.500L9.500 9.300M9.500 0.500L0.500 9.300" stroke="#707070" stroke-width="1.500"/></svg>
<div style="left:1px;top:214px;width:331px;height:71px;background:#f5f5f5;border:1px solid #bdbdbd;box-sizing:border-box;"></div>
<div style="left:4px;top:216px;width:66px;height:66px;background:#fff;border:1px solid #c8c8c8;box-sizing:border-box;"></div>
<svg style="left:4px;top:216px;" width="66" height="66" viewBox="4 216 66 66"><path d="M33.600 221.100L54.800 233.600L32.500 245.200L12.050 233.600Z" fill="#836d59" stroke="#0c0c0c" stroke-linejoin="round" stroke-width="1.200"/><path d="M33.800 228.400L43.800 233.900V238.300L36.500 242L33.800 240.500Z" fill="#efc9a5"/><path d="M43.800 233.900V238.300M33.800 226.500V240.500" stroke="#0c0c0c" stroke-width="0.700"/><path d="M43.800 236.500L47.500 234.700V238.500L43.800 238.300Z" fill="#efc9a5"/><path d="M12.050 233.600L32.500 245.200L36.600 243L16.300 231.300Z" fill="#efc9a5" stroke="#0c0c0c" stroke-linejoin="round" stroke-width="0.800"/><path d="M33.600 221.100L54.800 233.600L51.300 235.500L30.200 223Z" fill="#efc9a5" stroke="#0c0c0c" stroke-linejoin="round" stroke-width="0.800"/><path d="M12.050 233.600L32.500 245.200V280.700L12.050 268.600Z" fill="#efc9a5" stroke="#0c0c0c" stroke-linejoin="round" stroke-width="1.300"/><path d="M32.500 245.200L54.800 233.600V264.200L51.900 266.100V270.100L32.500 280.700Z" fill="#836d59" stroke="#0c0c0c" stroke-linejoin="round" stroke-width="1.300"/><path d="M12.050 265L32.500 275.600L51.900 266.100" fill="none" stroke="#0c0c0c" stroke-width="0.800"/><path d="M12.700 266.200L31.900 276.300V279.600L12.700 268.300Z" fill="#e6c09c"/><path d="M33.200 276.200L51.300 267.300V269.700L33.200 279.500Z" fill="#77624f"/></svg>
<span class="t" id="t51" style="left:74px;top:233.5px;color:#222;">SSG_Cabinet_Base_2_Door_1_Drawer_LAM</span>
<span class="t" id="t52" style="left:74px;top:249.5px;color:#222;">Default</span>
<svg style="left:316px;top:249px" width="8" height="4" viewBox="0 0 8 4"><path d="M0 0H8L4.0 4Z" fill="#666"/></svg>
<span class="t" id="t53" style="left:5px;top:290.5px;color:#222;">Casework (1)</span>
<svg style="left:239px;top:296px;" width="8" height="6" viewBox="0 0 8 6"><path d="M1 1L4 4.500L7 1" fill="none" stroke="#555" stroke-width="1.300"/></svg>
<div style="left:1px;top:310px;width:250px;height:2px;background:#c8c8c8;"></div>
<svg style="left:256px;top:291px;" width="17" height="17" viewBox="0 0 17 17"><rect x="0.500" y="0.500" width="6" height="6" rx="1" fill="#fff" stroke="#333" stroke-width="1"/><rect x="8.500" y="0.500" width="6" height="6" rx="1" fill="#fff" stroke="#333" stroke-width="1"/><rect x="0.500" y="8.500" width="6" height="6" rx="1" fill="#fff" stroke="#333" stroke-width="1"/><rect x="8.500" y="6.500" width="7.500" height="9.500" fill="#fff" stroke="#333" stroke-width="1"/><rect x="10" y="8" width="4.500" height="3" fill="#1e88e5"/><path d="M10 13.500h4.500" stroke="#333" stroke-width="0.800"/></svg>
<span class="t" id="t54" style="left:277px;top:290.5px;color:#222;">Edit Type</span>
<div style="left:1px;top:316px;width:314px;height:666px;background:#fff;"></div>
<div style="left:1px;top:317px;width:314px;height:17px;background:#e6e6e6;"></div>
<span class="t" id="t55" style="left:3px;top:316.5px;color:#1a1a2a;font-weight:bold;">Constraints</span>
<svg style="left:303px;top:321px;" width="6" height="9" viewBox="0 0 6 9"><path d="M0.500 4L3 1.200L5.500 4M0.500 8L3 5.200L5.500 8" fill="none" stroke="#111" stroke-width="1.200"/></svg>
<div style="left:1px;top:351px;width:314px;height:1px;background:#ececec;"></div>
<div style="left:152px;top:334px;width:1px;height:18px;background:#ececec;"></div>
<div style="left:302px;top:334px;width:1px;height:18px;background:#ececec;"></div>
<span class="t" id="t56" style="left:9px;top:334.5px;color:#111;">Level</span>
<span class="t" id="t57" style="left:155px;top:334.5px;color:#111;">Level 1</span>
<div style="left:1px;top:369px;width:314px;height:1px;background:#ececec;"></div>
<div style="left:152px;top:352px;width:1px;height:18px;background:#ececec;"></div>
<div style="left:302px;top:352px;width:1px;height:18px;background:#ececec;"></div>
<span class="t" id="t58" style="left:9px;top:352.5px;color:#111;">Elevation from Level</span>
<span class="t" id="t59" style="left:155px;top:352.5px;color:#111;">0&#x27;  0&quot;</span>
<div style="left:1px;top:387px;width:314px;height:1px;background:#ececec;"></div>
<div style="left:152px;top:370px;width:1px;height:18px;background:#ececec;"></div>
<div style="left:302px;top:370px;width:1px;height:18px;background:#ececec;"></div>
<span class="t" id="t60" style="left:9px;top:370.5px;color:#8a8a8a;">Host</span>
<span class="t" id="t61" style="left:155px;top:370.5px;color:#8a8a8a;">Level : Level 1</span>
<div style="left:1px;top:405px;width:314px;height:1px;background:#ececec;"></div>
<div style="left:152px;top:388px;width:1px;height:18px;background:#ececec;"></div>
<div style="left:302px;top:388px;width:1px;height:18px;background:#ececec;"></div>
<span class="t" id="t62" style="left:9px;top:388.5px;color:#111;">Offset from Host</span>
<span class="t" id="t63" style="left:155px;top:388.5px;color:#111;">0&#x27;  0&quot;</span>
<div style="left:1px;top:423px;width:314px;height:1px;background:#ececec;"></div>
<div style="left:152px;top:406px;width:1px;height:18px;background:#ececec;"></div>
<div style="left:302px;top:406px;width:1px;height:18px;background:#ececec;"></div>
<span class="t" id="t64" style="left:9px;top:406.5px;color:#111;">Moves With Nearby Elem...</span>
<div style="left:157px;top:410px;width:11px;height:11px;background:#fff;border:1px solid #555;box-sizing:border-box;"></div>
<div style="left:1px;top:425px;width:314px;height:17px;background:#e6e6e6;"></div>
<span class="t" id="t65" style="left:3px;top:424.5px;color:#1a1a2a;font-weight:bold;">Construction</span>
<svg style="left:303px;top:429px;" width="6" height="9" viewBox="0 0 6 9"><path d="M0.500 4L3 1.200L5.500 4M0.500 8L3 5.200L5.500 8" fill="none" stroke="#111" stroke-width="1.200"/></svg>
<div style="left:1px;top:459px;width:314px;height:1px;background:#ececec;"></div>
<div style="left:152px;top:442px;width:1px;height:18px;background:#ececec;"></div>
<div style="left:302px;top:442px;width:1px;height:18px;background:#ececec;"></div>
<span class="t" id="t66" style="left:9px;top:442.5px;color:#111;">ENTER_Kick Plate Number</span>
<span class="t" id="t67" style="left:155px;top:442.5px;color:#111;">1</span>
<div style="left:304px;top:443px;width:9px;height:15px;background:#fbfbfb;border:1px solid #c4c4c4;box-sizing:border-box;"></div>
<div style="left:1px;top:477px;width:314px;height:1px;background:#ececec;"></div>
<div style="left:152px;top:460px;width:1px;height:18px;background:#ececec;"></div>
<div style="left:302px;top:460px;width:1px;height:18px;background:#ececec;"></div>
<span class="t" id="t68" style="left:9px;top:460.5px;color:#111;">ENTER_Door Number</span>
<span class="t" id="t69" style="left:155px;top:460.5px;color:#111;">1</span>
<div style="left:304px;top:461px;width:9px;height:15px;background:#fbfbfb;border:1px solid #c4c4c4;box-sizing:border-box;"></div>
<div style="left:1px;top:495px;width:314px;height:1px;background:#ececec;"></div>
<div style="left:152px;top:478px;width:1px;height:18px;background:#ececec;"></div>
<div style="left:302px;top:478px;width:1px;height:18px;background:#ececec;"></div>
<span class="t" id="t70" style="left:9px;top:478.5px;color:#111;">ENTER_Handle Number</span>
<span class="t" id="t71" style="left:155px;top:478.5px;color:#111;">1</span>
<div style="left:304px;top:479px;width:9px;height:15px;background:#fbfbfb;border:1px solid #c4c4c4;box-sizing:border-box;"></div>
<div style="left:1px;top:513px;width:314px;height:1px;background:#ececec;"></div>
<div style="left:152px;top:496px;width:1px;height:18px;background:#ececec;"></div>
<div style="left:302px;top:496px;width:1px;height:18px;background:#ececec;"></div>
<span class="t" id="t72" style="left:9px;top:496.5px;color:#111;">ADD_Locks</span>
<div style="left:157px;top:500px;width:11px;height:11px;background:#fff;border:1px solid #555;box-sizing:border-box;"></div>
<div style="left:304px;top:497px;width:9px;height:15px;background:#fbfbfb;border:1px solid #c4c4c4;box-sizing:border-box;"></div>
<div style="left:1px;top:531px;width:314px;height:1px;background:#ececec;"></div>
<div style="left:152px;top:514px;width:1px;height:18px;background:#ececec;"></div>
<div style="left:302px;top:514px;width:1px;height:18px;background:#ececec;"></div>
<span class="t" id="t73" style="left:9px;top:514.5px;color:#8a8a8a;">STD_Shelves</span>
<span class="t" id="t74" style="left:155px;top:514.5px;color:#8a8a8a;">1</span>
<div style="left:1px;top:549px;width:314px;height:1px;background:#ececec;"></div>
<div style="left:152px;top:532px;width:1px;height:18px;background:#ececec;"></div>
<div style="left:302px;top:532px;width:1px;height:18px;background:#ececec;"></div>
<span class="t" id="t75" style="left:9px;top:532.5px;color:#111;">ADD_Shelves</span>
<span class="t" id="t76" style="left:155px;top:532.5px;color:#111;">0</span>
<div style="left:304px;top:533px;width:9px;height:15px;background:#fbfbfb;border:1px solid #c4c4c4;box-sizing:border-box;"></div>
<div style="left:1px;top:567px;width:314px;height:1px;background:#ececec;"></div>
<div style="left:152px;top:550px;width:1px;height:18px;background:#ececec;"></div>
<div style="left:302px;top:550px;width:1px;height:18px;background:#ececec;"></div>
<span class="t" id="t77" style="left:9px;top:550.5px;color:#8a8a8a;">TOTAL_Shelves</span>
<span class="t" id="t78" style="left:155px;top:550.5px;color:#8a8a8a;">1</span>
<div style="left:1px;top:569px;width:314px;height:17px;background:#e6e6e6;"></div>
<span class="t" id="t79" style="left:3px;top:568.5px;color:#1a1a2a;font-weight:bold;">Graphics</span>
<svg style="left:303px;top:573px;" width="6" height="9" viewBox="0 0 6 9"><path d="M0.500 4L3 1.200L5.500 4M0.500 8L3 5.200L5.500 8" fill="none" stroke="#111" stroke-width="1.200"/></svg>
<div style="left:1px;top:603px;width:314px;height:1px;background:#ececec;"></div>
<div style="left:152px;top:586px;width:1px;height:18px;background:#ececec;"></div>
<div style="left:302px;top:586px;width:1px;height:18px;background:#ececec;"></div>
<span class="t" id="t80" style="left:9px;top:586.5px;color:#111;">ANGLE_Door Swing</span>
<span class="t" id="t81" style="left:155px;top:586.5px;color:#111;">45.00°</span>
<div style="left:304px;top:587px;width:9px;height:15px;background:#fbfbfb;border:1px solid #c4c4c4;box-sizing:border-box;"></div>
<div style="left:1px;top:621px;width:314px;height:1px;background:#ececec;"></div>
<div style="left:152px;top:604px;width:1px;height:18px;background:#ececec;"></div>
<div style="left:302px;top:604px;width:1px;height:18px;background:#ececec;"></div>
<span class="t" id="t82" style="left:9px;top:604.5px;color:#111;">VIS_Plan Swing</span>
<div style="left:157px;top:608px;width:11px;height:11px;background:#8a8a8a;border:1px solid #777;box-sizing:border-box;"><svg width="9" height="9" viewBox="0 0 9 9" style="position:absolute;left:0;top:0"><path d="M1.500 4.500L3.600 6.600L7.500 2" fill="none" stroke="#fff" stroke-width="1.400"/></svg></div>
<div style="left:304px;top:605px;width:9px;height:15px;background:#fbfbfb;border:1px solid #c4c4c4;box-sizing:border-box;"></div>
<div style="left:1px;top:623px;width:314px;height:17px;background:#e6e6e6;"></div>
<span class="t" id="t83" style="left:3px;top:622.5px;color:#1a1a2a;font-weight:bold;">Materials and Finishes</span>
<svg style="left:303px;top:627px;" width="6" height="9" viewBox="0 0 6 9"><path d="M0.500 4L3 1.200L5.500 4M0.500 8L3 5.200L5.500 8" fill="none" stroke="#111" stroke-width="1.200"/></svg>
<div style="left:1px;top:657px;width:314px;height:1px;background:#ececec;"></div>
<div style="left:152px;top:640px;width:1px;height:18px;background:#ececec;"></div>
<div style="left:302px;top:640px;width:1px;height:18px;background:#ececec;"></div>
<span class="t" id="t84" style="left:9px;top:640.5px;color:#111;">MAT_Cabinet</span>
<span class="t" id="t85" style="left:155px;top:640.5px;color:#111;">SSG_Kensington_Maple...</span>
<div style="left:304px;top:641px;width:9px;height:15px;background:#fbfbfb;border:1px solid #c4c4c4;box-sizing:border-box;"></div>
<div style="left:1px;top:675px;width:314px;height:1px;background:#ececec;"></div>
<div style="left:152px;top:658px;width:1px;height:18px;background:#ececec;"></div>
<div style="left:302px;top:658px;width:1px;height:18px;background:#ececec;"></div>
<span class="t" id="t86" style="left:9px;top:658.5px;color:#111;">MAT_Front</span>
<span class="t" id="t87" style="left:155px;top:658.5px;color:#111;">SSG_Kensington_Maple...</span>
<div style="left:304px;top:659px;width:9px;height:15px;background:#fbfbfb;border:1px solid #c4c4c4;box-sizing:border-box;"></div>
<div style="left:1px;top:677px;width:314px;height:17px;background:#e6e6e6;"></div>
<span class="t" id="t88" style="left:3px;top:676.5px;color:#1a1a2a;font-weight:bold;">Structural</span>
<svg style="left:303px;top:681px;" width="6" height="9" viewBox="0 0 6 9"><path d="M0.500 4L3 1.200L5.500 4M0.500 8L3 5.200L5.500 8" fill="none" stroke="#111" stroke-width="1.200"/></svg>
<div style="left:1px;top:711px;width:314px;height:1px;background:#ececec;"></div>
<div style="left:152px;top:694px;width:1px;height:18px;background:#ececec;"></div>
<div style="left:302px;top:694px;width:1px;height:18px;background:#ececec;"></div>
<span class="t" id="t89" style="left:9px;top:694.5px;color:#8a8a8a;">ACTUAL_Weight</span>
<span class="t" id="t90" style="left:155px;top:694.5px;color:#8a8a8a;">125.000000</span>
<div style="left:1px;top:713px;width:314px;height:17px;background:#e6e6e6;"></div>
<span class="t" id="t91" style="left:3px;top:712.5px;color:#1a1a2a;font-weight:bold;">Dimensions</span>
<svg style="left:303px;top:717px;" width="6" height="9" viewBox="0 0 6 9"><path d="M0.500 4L3 1.200L5.500 4M0.500 8L3 5.200L5.500 8" fill="none" stroke="#111" stroke-width="1.200"/></svg>
<div style="left:1px;top:747px;width:314px;height:1px;background:#ececec;"></div>
<div style="left:152px;top:730px;width:1px;height:18px;background:#ececec;"></div>
<div style="left:302px;top:730px;width:1px;height:18px;background:#ececec;"></div>
<span class="t" id="t92" style="left:9px;top:730.5px;color:#111;">Width</span>
<span class="t" id="t93" style="left:155px;top:730.5px;color:#111;">10&#x27;  0&quot;</span>
<div style="left:304px;top:731px;width:9px;height:15px;background:#fbfbfb;border:1px solid #c4c4c4;box-sizing:border-box;"></div>
<div style="left:1px;top:765px;width:314px;height:1px;background:#ececec;"></div>
<div style="left:152px;top:748px;width:1px;height:18px;background:#ececec;"></div>
<div style="left:302px;top:748px;width:1px;height:18px;background:#ececec;"></div>
<span class="t" id="t94" style="left:9px;top:748.5px;color:#8a8a8a;">ACTUAL_Width</span>
<span class="t" id="t95" style="left:155px;top:748.5px;color:#8a8a8a;">3&#x27;  6&quot;</span>
<div style="left:1px;top:783px;width:314px;height:1px;background:#ececec;"></div>
<div style="left:152px;top:766px;width:1px;height:18px;background:#ececec;"></div>
<div style="left:302px;top:766px;width:1px;height:18px;background:#ececec;"></div>
<span class="t" id="t96" style="left:9px;top:766.5px;color:#111;">Depth</span>
<span class="t" id="t97" style="left:155px;top:766.5px;color:#111;">2&#x27;  0&quot;</span>
<div style="left:304px;top:767px;width:9px;height:15px;background:#fbfbfb;border:1px solid #c4c4c4;box-sizing:border-box;"></div>
<div style="left:1px;top:801px;width:314px;height:1px;background:#ececec;"></div>
<div style="left:152px;top:784px;width:1px;height:18px;background:#ececec;"></div>
<div style="left:302px;top:784px;width:1px;height:18px;background:#ececec;"></div>
<span class="t" id="t98" style="left:9px;top:784.5px;color:#8a8a8a;">ACTUAL_Depth</span>
<span class="t" id="t99" style="left:155px;top:784.5px;color:#8a8a8a;">2&#x27;  0&quot;</span>
<div style="left:1px;top:819px;width:314px;height:1px;background:#ececec;"></div>
<div style="left:152px;top:802px;width:1px;height:18px;background:#ececec;"></div>
<div style="left:302px;top:802px;width:1px;height:18px;background:#ececec;"></div>
<span class="t" id="t100" style="left:9px;top:802.5px;color:#111;">Height</span>
<span class="t" id="t101" style="left:155px;top:802.5px;color:#111;">2&#x27;  11&quot;</span>
<div style="left:304px;top:803px;width:9px;height:15px;background:#fbfbfb;border:1px solid #c4c4c4;box-sizing:border-box;"></div>
<div style="left:1px;top:837px;width:314px;height:1px;background:#ececec;"></div>
<div style="left:152px;top:820px;width:1px;height:18px;background:#ececec;"></div>
<div style="left:302px;top:820px;width:1px;height:18px;background:#ececec;"></div>
<span class="t" id="t102" style="left:9px;top:820.5px;color:#8a8a8a;">ACTUAL_Height</span>
<span class="t" id="t103" style="left:155px;top:820.5px;color:#8a8a8a;">2&#x27;  11&quot;</span>
<div style="left:1px;top:839px;width:314px;height:17px;background:#e6e6e6;"></div>
<span class="t" id="t104" style="left:3px;top:838.5px;color:#1a1a2a;font-weight:bold;">Identity Data</span>
<svg style="left:303px;top:843px;" width="6" height="9" viewBox="0 0 6 9"><path d="M0.500 4L3 1.200L5.500 4M0.500 8L3 5.200L5.500 8" fill="none" stroke="#111" stroke-width="1.200"/></svg>
<div style="left:1px;top:873px;width:314px;height:1px;background:#ececec;"></div>
<div style="left:152px;top:856px;width:1px;height:18px;background:#ececec;"></div>
<div style="left:302px;top:856px;width:1px;height:18px;background:#ececec;"></div>
<span class="t" id="t105" style="left:9px;top:856.5px;color:#111;">SSG_Product Code</span>
<div style="left:304px;top:857px;width:9px;height:15px;background:#fbfbfb;border:1px solid #c4c4c4;box-sizing:border-box;"></div>
<div style="left:1px;top:891px;width:314px;height:1px;background:#ececec;"></div>
<div style="left:152px;top:874px;width:1px;height:18px;background:#ececec;"></div>
<div style="left:302px;top:874px;width:1px;height:18px;background:#ececec;"></div>
<span class="t" id="t106" style="left:9px;top:874.5px;color:#111;">Image</span>
<div style="left:1px;top:909px;width:314px;height:1px;background:#ececec;"></div>
<div style="left:152px;top:892px;width:1px;height:18px;background:#ececec;"></div>
<div style="left:302px;top:892px;width:1px;height:18px;background:#ececec;"></div>
<span class="t" id="t107" style="left:9px;top:892.5px;color:#111;">Comments</span>
<div style="left:304px;top:893px;width:9px;height:15px;background:#fbfbfb;border:1px solid #c4c4c4;box-sizing:border-box;"></div>
<div style="left:1px;top:927px;width:314px;height:1px;background:#ececec;"></div>
<div style="left:152px;top:910px;width:1px;height:18px;background:#ececec;"></div>
<div style="left:302px;top:910px;width:1px;height:18px;background:#ececec;"></div>
<span class="t" id="t108" style="left:9px;top:910.5px;color:#111;">Mark</span>
<div style="left:1px;top:929px;width:314px;height:17px;background:#e6e6e6;"></div>
<span class="t" id="t109" style="left:3px;top:928.5px;color:#1a1a2a;font-weight:bold;">Phasing</span>
<svg style="left:303px;top:933px;" width="6" height="9" viewBox="0 0 6 9"><path d="M0.500 4L3 1.200L5.500 4M0.500 8L3 5.200L5.500 8" fill="none" stroke="#111" stroke-width="1.200"/></svg>
<div style="left:1px;top:963px;width:314px;height:1px;background:#ececec;"></div>
<div style="left:152px;top:946px;width:1px;height:18px;background:#ececec;"></div>
<div style="left:302px;top:946px;width:1px;height:18px;background:#ececec;"></div>
<span class="t" id="t110" style="left:9px;top:946.5px;color:#111;">Phase Created</span>
<span class="t" id="t111" style="left:155px;top:946.5px;color:#111;">New Construction</span>
<div style="left:1px;top:981px;width:314px;height:1px;background:#ececec;"></div>
<div style="left:152px;top:964px;width:1px;height:18px;background:#ececec;"></div>
<div style="left:302px;top:964px;width:1px;height:18px;background:#ececec;"></div>
<span class="t" id="t112" style="left:9px;top:964.5px;color:#111;">Phase Demolished</span>
<span class="t" id="t113" style="left:155px;top:964.5px;color:#111;">None</span>
<div style="left:153px;top:335px;width:149px;height:17px;border:1px solid #111;box-sizing:border-box;"></div>
<svg style="left:0px;top:715px;" width="320" height="60" viewBox="0 0 320 60"><path d="M2 11.500 C40 10.500 110 10 177 8.500 C230 9.500 270 10.500 302 12.500 L302 45.500 C270 47 220 48.500 160 48.500 C110 49 60 50 18 50.500 L2 50.500 Z" fill="#ffe600" style="mix-blend-mode:multiply"/></svg>
<div style="left:314.5px;top:316px;width:17.5px;height:666.5px;background:#ebebeb;"></div>
<div style="left:315px;top:966px;width:17px;height:1px;background:#d8d8d8;"></div>
<div style="left:315px;top:333px;width:17px;height:1px;background:#d8d8d8;"></div>
<svg style="left:319px;top:322px;" width="9" height="6" viewBox="0 0 9 6"><path d="M0.500 5L4.500 1L8.500 5" fill="none" stroke="#9a9a9a" stroke-width="1.500"/></svg>
<svg style="left:319px;top:972.5px;" width="9" height="6" viewBox="0 0 9 6"><path d="M0.500 0.800L4.500 4.800L8.500 0.800" fill="none" stroke="#7a7a7a" stroke-width="1.600"/></svg>
<div style="left:319.5px;top:334px;width:7.5px;height:503px;background:#8b8b8b;border-radius:4px;"></div>
<div style="left:3px;top:984px;width:20px;height:22px;background:#9fd5f3;border:1px solid #6cbbe8;box-sizing:border-box;border-radius:2px;"></div>
<svg style="left:3px;top:984px;" width="70" height="22" viewBox="0 0 70 22"><path d="M4 7.500h7M4 10.500h7M4 13.500h7M4 16.500h5" stroke="#444" stroke-width="1"/><path d="M14.500 7v10" stroke="#222" stroke-width="1"/><path d="M12.500 9l2-2.800 2 2.800zM12.500 15.500l2 2.800 2-2.800z" fill="#222"/><text x="28" y="10" font-family="Liberation Sans,sans-serif" font-size="7.500" fill="#1e88e5">A</text><text x="28" y="18" font-family="Liberation Sans,sans-serif" font-size="7.500" fill="#666">Z</text><path d="M38.500 5.500v11" stroke="#222" stroke-width="1"/><path d="M36.500 14.500l2 3 2-3z" fill="#222"/><text x="53" y="10" font-family="Liberation Sans,sans-serif" font-size="7.500" fill="#666">Z</text><text x="53" y="18" font-family="Liberation Sans,sans-serif" font-size="7.500" fill="#1e88e5">A</text><path d="M63.500 5.500v11" stroke="#222" stroke-width="1"/><path d="M61.500 14.500l2 3 2-3z" fill="#222"/></svg>
<div style="left:259px;top:985.5px;width:70px;height:17px;background:#f0f0f0;border:1px solid #d0d0d0;box-sizing:border-box;border-radius:2px;"></div>
<span class="t" id="t114" style="left:279px;top:986.5px;color:#a8a8a8;">Apply</span>
<div style="left:336px;top:197px;width:1215px;height:19.5px;background:#cdcdcd;"></div>
<svg style="left:341px;top:201px;" width="17" height="13" viewBox="0 0 17 13"><path d="M0.500 0.700h11l4 4v7h-15z" fill="#e0e0e0" stroke="#8a8a8a" stroke-width="1" stroke-linejoin="round"/><path d="M11.500 0.700v4h4z" fill="#8a8a8a"/></svg>
<span class="t" id="t115" style="left:364px;top:199.5px;color:#333;">*Admin 01 - Project Information</span>
<div style="left:557px;top:197px;width:128px;height:20px;background:#fff;"></div>
<svg style="left:561px;top:199px;" width="17" height="16" viewBox="0 0 17 16"><path d="M1 8L8 1.500L15 8" fill="none" stroke="#333" stroke-width="1.400" stroke-linejoin="round"/><path d="M2.800 7.500v7.500h10.400V7.500L8 2.800z" fill="#fff" stroke="#333" stroke-width="1.100"/><path d="M10 3.500l3.500 3.200V15h-0.600z" fill="#999"/><rect x="5" y="10" width="3" height="5" fill="#e0b030" stroke="#555" stroke-width="0.500"/></svg>
<span class="t" id="t116" style="left:586px;top:199.5px;color:#222;">{3D}</span>
<svg style="left:670px;top:203px;" width="10" height="10" viewBox="0 0 10 10"><path d="M0.800 0.800L9.200 9.200M9.200 0.800L0.800 9.200" stroke="#444" stroke-width="1.300"/></svg>
<svg style="left:1535px;top:204px;" width="10" height="8" viewBox="0 0 10 8"><path d="M0.500 0.800h9" stroke="#666" stroke-width="1.200"/><path d="M1 3.500h8l-4 4z" fill="#666"/></svg>
<div style="left:336px;top:216.5px;width:1215px;height:791.5px;background:#fff;"></div>
<svg style="left:337px;top:217px;" width="1194" height="772" viewBox="337 217 1194 772"><polygon points="550.1,697.8 756.4,588.5 756.4,298.2 550.1,407.5" fill="rgb(5,24,69)" fill-opacity="0.4"/><polygon points="756.4,588.5 762.2,592.3 762.2,302.0 756.4,298.2" fill="rgb(5,24,69)" fill-opacity="0.4"/><polygon points="550.1,407.5 555.8,411.2 762.2,302.0 756.4,298.2" fill="rgb(78,132,250)" fill-opacity="0.4"/><polygon points="555.8,701.6 762.2,592.3 762.2,302.0 555.8,411.2" fill="rgb(56,84,152)" fill-opacity="0.4"/><polygon points="550.1,697.8 555.8,701.6 555.8,411.2 550.1,407.5" fill="rgb(5,24,69)" fill-opacity="0.4"/><polygon points="567.4,726.1 573.1,729.9 762.2,629.8 756.4,626.0" fill="rgb(5,24,69)" fill-opacity="0.4"/><polygon points="567.4,726.1 756.4,626.0 756.4,588.5 567.4,688.6" fill="rgb(5,24,69)" fill-opacity="0.4"/><polygon points="756.4,626.0 762.2,629.8 762.2,592.3 756.4,588.5" fill="rgb(5,24,69)" fill-opacity="0.4"/><polygon points="573.1,729.9 762.2,629.8 762.2,592.3 573.1,692.4" fill="rgb(56,84,152)" fill-opacity="0.4"/><polygon points="567.4,726.1 573.1,729.9 573.1,692.4 567.4,688.6" fill="rgb(5,24,69)" fill-opacity="0.4"/><polygon points="755.5,633.3 1066.2,836.8 1072.8,833.2 762.2,629.8" fill="rgb(5,24,69)" fill-opacity="0.4"/><polygon points="755.5,633.3 762.2,629.8 762.2,302.0 755.5,305.5" fill="rgb(5,24,69)" fill-opacity="0.4"/><polygon points="762.2,629.8 1072.8,833.2 1072.8,505.4 762.2,302.0" fill="rgb(5,24,69)" fill-opacity="0.4"/><polygon points="755.5,305.5 1066.2,509.0 1072.8,505.4 762.2,302.0" fill="rgb(78,132,250)" fill-opacity="0.4"/><polygon points="1066.2,836.8 1072.8,833.2 1072.8,505.4 1066.2,509.0" fill="rgb(56,84,152)" fill-opacity="0.4"/><polygon points="755.5,633.3 1066.2,836.8 1066.2,509.0 755.5,305.5" fill="rgb(5,24,69)" fill-opacity="0.4"/><polygon points="567.4,726.1 889.5,937.1 896.2,933.6 574.0,722.6" fill="rgb(5,24,69)" fill-opacity="0.4"/><polygon points="567.4,726.1 574.0,722.6 574.0,685.1 567.4,688.6" fill="rgb(5,24,69)" fill-opacity="0.4"/><polygon points="574.0,722.6 896.2,933.6 896.2,896.1 574.0,685.1" fill="rgb(5,24,69)" fill-opacity="0.4"/><polygon points="567.4,688.6 889.5,899.7 896.2,896.1 574.0,685.1" fill="rgb(78,132,250)" fill-opacity="0.4"/><polygon points="889.5,937.1 896.2,933.6 896.2,896.1 889.5,899.7" fill="rgb(56,84,152)" fill-opacity="0.4"/><polygon points="567.4,726.1 889.5,937.1 889.5,899.7 567.4,688.6" fill="rgb(5,24,69)" fill-opacity="0.4"/><polygon points="555.8,701.6 866.5,905.1 1066.2,799.3 755.5,595.8" fill="rgb(35,58,115)" fill-opacity="0.4"/><polygon points="555.8,701.6 755.5,595.8 755.5,588.8 555.8,694.6" fill="rgb(5,24,69)" fill-opacity="0.4"/><polygon points="755.5,595.8 1066.2,799.3 1066.2,792.3 755.5,588.8" fill="rgb(5,24,69)" fill-opacity="0.4"/><polygon points="555.8,694.6 866.5,898.0 1066.2,792.3 755.5,588.8" fill="rgb(105,155,255)" fill-opacity="0.4"/><polygon points="866.5,905.1 1066.2,799.3 1066.2,792.3 866.5,898.0" fill="rgb(56,84,152)" fill-opacity="0.4"/><polygon points="555.8,701.6 866.5,905.1 866.5,898.0 555.8,694.6" fill="rgb(5,24,69)" fill-opacity="0.4"/><polygon points="555.8,694.6 561.6,698.3 761.3,592.6 755.5,588.8" fill="rgb(78,132,250)" fill-opacity="0.4"/><polygon points="860.7,894.3 866.5,898.0 1066.2,792.3 1060.4,788.5" fill="rgb(78,132,250)" fill-opacity="0.4"/><polygon points="561.6,698.3 860.7,894.3 867.4,890.7 568.2,694.8" fill="rgb(78,132,250)" fill-opacity="0.4"/><polygon points="754.6,596.1 1053.8,792.0 1060.4,788.5 761.3,592.6" fill="rgb(78,132,250)" fill-opacity="0.4"/><polygon points="558.0,581.5 868.7,784.9 1066.2,680.4 755.5,476.9" fill="rgb(5,24,69)" fill-opacity="0.4"/><polygon points="558.0,581.5 755.5,476.9 755.5,468.5 558.0,573.0" fill="rgb(5,24,69)" fill-opacity="0.4"/><polygon points="755.5,476.9 1066.2,680.4 1066.2,671.9 755.5,468.5" fill="rgb(5,24,69)" fill-opacity="0.4"/><polygon points="558.0,573.0 868.7,776.5 1066.2,671.9 755.5,468.5" fill="rgb(78,132,250)" fill-opacity="0.4"/><polygon points="868.7,784.9 1066.2,680.4 1066.2,671.9 868.7,776.5" fill="rgb(56,84,152)" fill-opacity="0.4"/><polygon points="558.0,581.5 868.7,784.9 868.7,776.5 558.0,573.0" fill="rgb(5,24,69)" fill-opacity="0.4"/><polygon points="721.3,330.6 1032.0,534.1 1066.2,516.0 755.5,312.5" fill="rgb(5,24,69)" fill-opacity="0.4"/><polygon points="721.3,330.6 755.5,312.5 755.5,305.5 721.3,323.6" fill="rgb(5,24,69)" fill-opacity="0.4"/><polygon points="755.5,312.5 1066.2,516.0 1066.2,509.0 755.5,305.5" fill="rgb(5,24,69)" fill-opacity="0.4"/><polygon points="721.3,323.6 1032.0,527.0 1066.2,509.0 755.5,305.5" fill="rgb(78,132,250)" fill-opacity="0.4"/><polygon points="1032.0,534.1 1066.2,516.0 1066.2,509.0 1032.0,527.0" fill="rgb(56,84,152)" fill-opacity="0.4"/><polygon points="721.3,330.6 1032.0,534.1 1032.0,527.0 721.3,323.6" fill="rgb(5,24,69)" fill-opacity="0.4"/><polygon points="555.8,418.3 866.5,621.7 901.5,603.2 590.9,399.7" fill="rgb(5,24,69)" fill-opacity="0.4"/><polygon points="555.8,418.3 590.9,399.7 590.9,392.7 555.8,411.2" fill="rgb(5,24,69)" fill-opacity="0.4"/><polygon points="590.9,399.7 901.5,603.2 901.5,596.1 590.9,392.7" fill="rgb(5,24,69)" fill-opacity="0.4"/><polygon points="555.8,411.2 866.5,614.7 901.5,596.1 590.9,392.7" fill="rgb(78,132,250)" fill-opacity="0.4"/><polygon points="866.5,621.7 901.5,603.2 901.5,596.1 866.5,614.7" fill="rgb(56,84,152)" fill-opacity="0.4"/><polygon points="555.8,418.3 866.5,621.7 866.5,614.7 555.8,411.2" fill="rgb(5,24,69)" fill-opacity="0.4"/><polygon points="866.5,905.1 1072.8,795.8 1072.8,505.4 866.5,614.7" fill="rgb(5,24,69)" fill-opacity="0.4"/><polygon points="1072.8,795.8 1078.6,799.5 1078.6,509.2 1072.8,505.4" fill="rgb(5,24,69)" fill-opacity="0.4"/><polygon points="866.5,614.7 872.2,618.5 1078.6,509.2 1072.8,505.4" fill="rgb(78,132,250)" fill-opacity="0.4"/><polygon points="872.2,908.8 1078.6,799.5 1078.6,509.2 872.2,618.5" fill="rgb(56,84,152)" fill-opacity="0.4"/><polygon points="866.5,905.1 872.2,908.8 872.2,618.5 866.5,614.7" fill="rgb(5,24,69)" fill-opacity="0.4"/><polygon points="883.8,933.3 889.5,937.1 1078.6,837.0 1072.8,833.2" fill="rgb(5,24,69)" fill-opacity="0.4"/><polygon points="883.8,933.3 1072.8,833.2 1072.8,795.8 883.8,895.9" fill="rgb(5,24,69)" fill-opacity="0.4"/><polygon points="1072.8,833.2 1078.6,837.0 1078.6,799.5 1072.8,795.8" fill="rgb(5,24,69)" fill-opacity="0.4"/><polygon points="889.5,937.1 1078.6,837.0 1078.6,799.5 889.5,899.7" fill="rgb(56,84,152)" fill-opacity="0.4"/><polygon points="883.8,933.3 889.5,937.1 889.5,899.7 883.8,895.9" fill="rgb(5,24,69)" fill-opacity="0.4"/><polygon points="543.4,699.9 704.1,805.2 710.8,801.7 550.1,696.4" fill="rgb(5,24,69)" fill-opacity="0.4"/><polygon points="543.4,699.9 550.1,696.4 550.1,464.6 543.4,468.1" fill="rgb(62,92,165)" fill-opacity="0.4"/><polygon points="550.1,696.4 710.8,801.7 710.8,569.9 550.1,464.6" fill="rgb(36,55,88)" fill-opacity="0.4"/><polygon points="543.4,468.1 704.1,573.4 710.8,569.9 550.1,464.6" fill="rgb(78,132,250)" fill-opacity="0.4"/><polygon points="704.1,805.2 710.8,801.7 710.8,569.9 704.1,573.4" fill="rgb(70,105,185)" fill-opacity="0.4"/><polygon points="543.4,699.9 704.1,805.2 704.1,573.4 543.4,468.1" fill="rgb(36,55,88)" fill-opacity="0.4"/><polygon points="704.9,805.7 865.6,910.9 872.2,907.4 711.5,802.2" fill="rgb(5,24,69)" fill-opacity="0.4"/><polygon points="704.9,805.7 711.5,802.2 711.5,570.4 704.9,573.9" fill="rgb(62,92,165)" fill-opacity="0.4"/><polygon points="711.5,802.2 872.2,907.4 872.2,675.6 711.5,570.4" fill="rgb(36,55,88)" fill-opacity="0.4"/><polygon points="704.9,573.9 865.6,679.1 872.2,675.6 711.5,570.4" fill="rgb(78,132,250)" fill-opacity="0.4"/><polygon points="865.6,910.9 872.2,907.4 872.2,675.6 865.6,679.1" fill="rgb(70,105,185)" fill-opacity="0.4"/><polygon points="704.9,805.7 865.6,910.9 865.6,679.1 704.9,573.9" fill="rgb(36,55,88)" fill-opacity="0.4"/><polygon points="543.4,466.2 865.6,677.3 872.2,673.7 550.1,462.7" fill="rgb(5,24,69)" fill-opacity="0.4"/><polygon points="543.4,466.2 550.1,462.7 550.1,407.5 543.4,411.0" fill="rgb(62,92,165)" fill-opacity="0.4"/><polygon points="550.1,462.7 872.2,673.7 872.2,618.5 550.1,407.5" fill="rgb(36,55,88)" fill-opacity="0.4"/><polygon points="543.4,411.0 865.6,622.0 872.2,618.5 550.1,407.5" fill="rgb(78,132,250)" fill-opacity="0.4"/><polygon points="865.6,677.3 872.2,673.7 872.2,618.5 865.6,622.0" fill="rgb(70,105,185)" fill-opacity="0.4"/><polygon points="543.4,466.2 865.6,677.3 865.6,622.0 543.4,411.0" fill="rgb(36,55,88)" fill-opacity="0.4"/><path d="M678.8 526.6C680 545 700 557 728.6 560.2" fill="none" stroke="rgb(40,62,122)" stroke-width="2" stroke-linecap="round" opacity="0.75"/><path d="M694.3 587C680 605 680 630 694.3 648" fill="none" stroke="rgb(40,62,122)" stroke-width="2" stroke-linecap="round" opacity="0.75"/><path d="M714.7 599.8C700 618 700 643 714.7 661.1" fill="none" stroke="rgb(40,62,122)" stroke-width="2" stroke-linecap="round" opacity="0.75"/></svg>
<svg style="left:337px;top:255px;" width="180" height="140" viewBox="337 255 180 140"><ellipse cx="428.300" cy="337" rx="64" ry="41" fill="#f2f2f2" stroke="#d0d0d0" stroke-width="1" stroke-dasharray="2 1.500"/><ellipse cx="428.300" cy="333" rx="49" ry="30" fill="#fff" stroke="#d4d4d4" stroke-width="1" stroke-dasharray="2 1.500"/><ellipse cx="428" cy="338" rx="36" ry="20" fill="#e8e8e8" opacity="0.700"/><path d="M393.300 287.500L430 271.300L462.800 290L426.500 308.800Z" fill="#f7f7f7" stroke="#8a8a8a" stroke-width="0.800" stroke-linejoin="round"/><path d="M393.300 287.500L426.500 308.800V348.800L395 327.500Z" fill="#ececec" stroke="#8a8a8a" stroke-width="0.800" stroke-linejoin="round"/><path d="M426.500 308.800L462.800 290L461.300 328.800L426.500 348.800Z" fill="#e4e4e4" stroke="#8a8a8a" stroke-width="0.800" stroke-linejoin="round"/><text transform="matrix(0.840,0.540,0,1,410,321.500)" font-family="Liberation Sans,sans-serif" font-weight="bold" text-anchor="middle" font-size="8.500" fill="#9ba1a8">FRONT</text><text transform="matrix(0.888,-0.460,0,1,444.500,322.500)" font-family="Liberation Sans,sans-serif" font-weight="bold" text-anchor="middle" font-size="8.500" fill="#9ba1a8">RIGHT</text><text transform="matrix(0.760,0.490,-0.800,0.410,427.500,292.500)" font-family="Liberation Sans,sans-serif" font-weight="bold" text-anchor="middle" font-size="8" fill="#a8adb3">TOP</text><text transform="translate(381,362) rotate(-32) scale(1.250,0.800)" font-family="Liberation Sans,sans-serif" font-weight="bold" text-anchor="middle" font-size="14" fill="#d8d8d8" stroke="#bdbdbd" stroke-width="0.600">S</text><text transform="translate(469,367) rotate(60) scale(1.250,0.800)" font-family="Liberation Sans,sans-serif" font-weight="bold" text-anchor="middle" font-size="14" fill="#d8d8d8" stroke="#bdbdbd" stroke-width="0.600">E</text><text transform="translate(469,311) rotate(30) scale(1.100,0.600)" font-family="Liberation Sans,sans-serif" font-weight="bold" text-anchor="middle" font-size="12" fill="#e0e0e0" stroke="#cfcfcf" stroke-width="0.500">N</text><text transform="translate(388,306) rotate(-28) scale(1.100,0.600)" font-family="Liberation Sans,sans-serif" font-weight="bold" text-anchor="middle" font-size="12" fill="#e0e0e0" stroke="#cfcfcf" stroke-width="0.500">W</text></svg>
<div style="left:338.5px;top:390px;width:35.5px;height:117.5px;background:#ebebeb;border:2px solid #858585;box-sizing:border-box;border-radius:5px;"></div>
<svg style="left:339px;top:391px;" width="35" height="116" viewBox="339 391 35 116"><circle cx="366" cy="397" r="3.500" fill="#8a8a8a"/><path d="M364.500 395.500l3 3M367.500 395.500l-3 3" stroke="#fff" stroke-width="0.900"/><path d="M356.300 410.500a11.300 11.300 0 1 0 11.300 11.300v-11.300z" fill="#e3e6ea" stroke="#444" stroke-width="1.100"/><circle cx="356.300" cy="421.500" r="7" fill="#d4d8de" stroke="#444" stroke-width="1.100"/><path d="M351.300 426.500l-3 3M361.300 426.500l3 3" stroke="#444" stroke-width="1"/><path d="M352.500 441h5l-2.500 3z" fill="#333"/><path d="M343 448.500h26" stroke="#999" stroke-width="1"/><rect x="348" y="457.500" width="10.500" height="10.500" fill="#6aa84f" stroke="#3f7a2a" stroke-width="0.800"/><circle cx="359.500" cy="467" r="3.300" fill="#f4f4f4" stroke="#222" stroke-width="1.100"/><path d="M361.800 469.500l3 3" stroke="#222" stroke-width="1.600"/><path d="M352.500 483h5l-2.500 3z" fill="#333"/><circle cx="366" cy="499.500" r="3.500" fill="#8a8a8a"/><path d="M364 499.500h4" stroke="#fff" stroke-width="1"/></svg>
<div style="left:1532px;top:219px;width:17px;height:770px;background:#e8e8e8;"></div>
<div style="left:1532px;top:235px;width:17px;height:1px;background:#d2d2d2;"></div>
<div style="left:1532px;top:972px;width:17px;height:1px;background:#d2d2d2;"></div>
<svg style="left:1536px;top:224px;" width="9" height="6" viewBox="0 0 9 6"><path d="M0.500 5L4.500 1L8.500 5" fill="none" stroke="#8a8a8a" stroke-width="1.600"/></svg>
<svg style="left:1536px;top:978.5px;" width="9" height="6" viewBox="0 0 9 6"><path d="M0.500 0.800L4.500 4.800L8.500 0.800" fill="none" stroke="#7a7a7a" stroke-width="1.600"/></svg>
<div style="left:1536.5px;top:596.5px;width:8px;height:17.5px;background:#8b8b8b;border-radius:4px;"></div>
<div style="left:338px;top:989px;width:442px;height:17px;background:#f5f5f5;"></div>
<div style="left:780px;top:989px;width:752px;height:17px;background:#e8e8e8;"></div>
<div style="left:1515.5px;top:989px;width:1px;height:17px;background:#d2d2d2;"></div>
<div style="left:797px;top:989px;width:1px;height:17px;background:#d2d2d2;"></div>
<div style="left:1532px;top:989px;width:17px;height:17px;background:#efefef;"></div>
<span class="t" id="t117" style="left:349px;top:989.5px;color:#222;">1/4&quot; = 1&#x27;-0&quot;</span>
<svg style="left:784px;top:992.5px;" width="7" height="10" viewBox="0 0 7 10"><path d="M6 0.700L1 5L6 9.300" fill="none" stroke="#a8a8a8" stroke-width="1.600"/></svg>
<svg style="left:1521px;top:992.5px;" width="7" height="10" viewBox="0 0 7 10"><path d="M1 0.700L6 5L1 9.300" fill="none" stroke="#7a7a7a" stroke-width="1.600"/></svg>
<div style="left:1147px;top:993.5px;width:17.5px;height:8.5px;background:#8b8b8b;border-radius:4px;"></div>
<svg style="left:1538px;top:996px;" width="9" height="8" viewBox="0 0 9 8"><rect x="6" y="0.300" width="2" height="2" fill="#8a8a8a"/><rect x="6" y="4.700" width="2" height="2" fill="#8a8a8a"/><rect x="1.200" y="4.700" width="2.500" height="2" fill="#8a8a8a"/></svg>
<svg style="left:337px;top:989px;" width="450" height="19" viewBox="337 989 450 19"><rect x="421.500" y="992" width="15" height="11" fill="#fff" stroke="#444" stroke-width="1"/><rect x="422" y="992.5" width="2" height="2" fill="#555"/><rect x="422" y="996.5" width="2" height="2" fill="#555"/><rect x="422" y="1000.5" width="2" height="2" fill="#555"/><rect x="424" y="994.5" width="2" height="2" fill="#555"/><rect x="424" y="998.5" width="2" height="2" fill="#555"/><rect x="426" y="992.5" width="2" height="2" fill="#555"/><rect x="426" y="996.5" width="2" height="2" fill="#555"/><rect x="426" y="1000.5" width="2" height="2" fill="#555"/><rect x="428" y="994.5" width="2" height="2" fill="#555"/><rect x="428" y="998.5" width="2" height="2" fill="#555"/><rect x="430" y="992.5" width="2" height="2" fill="#555"/><rect x="430" y="996.5" width="2" height="2" fill="#555"/><rect x="430" y="1000.5" width="2" height="2" fill="#555"/><rect x="432" y="994.5" width="2" height="2" fill="#555"/><rect x="432" y="998.5" width="2" height="2" fill="#555"/><rect x="434" y="992.5" width="2" height="2" fill="#555"/><rect x="434" y="996.5" width="2" height="2" fill="#555"/><rect x="434" y="1000.5" width="2" height="2" fill="#555"/><path d="M449 995l3-3.500h10.500l-3 3.500z" fill="#6cb2e4" stroke="#2f6fb5" stroke-width="0.700"/><path d="M459.500 995l3-3.500v9l-3 3.500z" fill="#4e9ad6" stroke="#2f6fb5" stroke-width="0.700"/><rect x="449" y="995" width="10.500" height="9" fill="#6cb2e4" stroke="#2f6fb5" stroke-width="0.700"/><path d="M451 997.500h6.500" stroke="#e8202a" stroke-width="1.400"/><path d="M451 1000h6.500" stroke="#2aa84a" stroke-width="1.400"/><path d="M451 1002.300h6.500" stroke="#f5f5f5" stroke-width="1"/><circle cx="479" cy="996.500" r="3.300" fill="#f5a10a"/><path d="M483.5 996.5L485.5 996.5" stroke="#f5a10a" stroke-width="1.200"/><path d="M482.2 999.7L483.6 1001.1" stroke="#f5a10a" stroke-width="1.200"/><path d="M479.0 1001.0L479.0 1003.0" stroke="#f5a10a" stroke-width="1.200"/><path d="M475.8 999.7L474.4 1001.1" stroke="#f5a10a" stroke-width="1.200"/><path d="M474.5 996.5L472.5 996.5" stroke="#f5a10a" stroke-width="1.200"/><path d="M475.8 993.3L474.4 991.9" stroke="#f5a10a" stroke-width="1.200"/><path d="M479.0 992.0L479.0 990.0" stroke="#f5a10a" stroke-width="1.200"/><path d="M482.2 993.3L483.6 991.9" stroke="#f5a10a" stroke-width="1.200"/><circle cx="485.5" cy="1000" r="2.8" fill="#5cc6cf"/><path d="M484.5 1002.8h2v1.500h-2z" fill="#777"/><circle cx="505.500" cy="996" r="4.800" fill="#f4f4f4" stroke="#666" stroke-width="1"/><ellipse cx="506.500" cy="1003" rx="6.500" ry="1.300" fill="#999"/><circle cx="511.500" cy="1000" r="2.800" fill="#f5b53a"/><path d="M510.500 1002.800h2v1.500h-2z" fill="#777"/><path d="M526 995c0 5 3 7 7 7s6-3 6.500-6.500l2-2h-3M526 995l-1.500-2h3M529 993.500h7" fill="none" stroke="#444" stroke-width="1"/><circle cx="538.5" cy="1000" r="2.8" fill="#5cc6cf"/><path d="M537.5 1002.8h2v1.500h-2z" fill="#777"/><path d="M555 992v9h9" fill="none" stroke="#444" stroke-width="1"/><path d="M551.500 998.500h2M559.500 989.500v2" stroke="#1e88e5" stroke-width="1.300"/><path d="M556.500 994.500h5.500v5" fill="none" stroke="#444" stroke-width="0.800" stroke-dasharray="1.500 1"/><path d="M560 999.500l4.500 4.500M564.500 999.500l-4.500 4.500" stroke="#e81123" stroke-width="1.500"/><path d="M581 992v9h9" fill="none" stroke="#444" stroke-width="1"/><path d="M577.500 998.500h2M585.500 989.500v2" stroke="#1e88e5" stroke-width="1.300"/><path d="M582.500 994.500h5.500v5" fill="none" stroke="#444" stroke-width="0.800" stroke-dasharray="1.500 1"/><circle cx="590" cy="1000" r="2.8" fill="#5cc6cf"/><path d="M589 1002.8h2v1.500h-2z" fill="#777"/><path d="M604 997.500l7-6 7 6" fill="none" stroke="#444" stroke-width="1.200" stroke-linejoin="round"/><path d="M605.500 997v7h11v-7l-5.500-4.700z" fill="#fff" stroke="#444" stroke-width="1"/><rect x="612" y="999.500" width="5.500" height="4.500" fill="#5cc6cf" stroke="#2a8f98" stroke-width="0.500"/><path d="M613.300 999.500v-1.500a1.500 1.500 0 0 1 3 0v1.500" fill="none" stroke="#2a8f98" stroke-width="0.800"/><circle cx="634" cy="999.500" r="2.800" fill="none" stroke="#999" stroke-width="1.100"/><circle cx="640.500" cy="999.500" r="2.800" fill="none" stroke="#999" stroke-width="1.100"/><path d="M631.500 998l1.500-4.500M643 998l-1.500-4.500M636.800 999h1" stroke="#999" stroke-width="1"/><circle cx="663" cy="995.500" r="4" fill="#5cc6cf"/><path d="M661.300 999.500h3.400v2h-3.400z" fill="#777"/><path d="M661.800 1002h2.400v1h-2.400z" fill="#777"/><rect x="683" y="992.500" width="9" height="8" fill="#fff" stroke="#555" stroke-width="0.900"/><path d="M685 995h5M685 997.500h3" stroke="#555" stroke-width="0.700"/><rect x="688.500" y="997.500" width="6" height="6" fill="#fff" stroke="#555" stroke-width="0.800" stroke-dasharray="1.500 1"/><path d="M708 1003v-8l3-3.500h8l3 3.500v4M708 995h11M711 991.500v8M715 991.500v8M719 991.500v8" fill="none" stroke="#555" stroke-width="0.800"/><path d="M709.500 997v6.500M712.500 997v6.500" stroke="#e8202a" stroke-width="1"/><path d="M708.500 999.500h5" stroke="#e8202a" stroke-width="0.800"/><circle cx="719.5" cy="1000" r="2.8" fill="#5cc6cf"/><path d="M718.5 1002.8h2v1.500h-2z" fill="#777"/><path d="M736 997l2.500-3h8l-2.500 3z" fill="#6cb2e4" stroke="#2f6fb5" stroke-width="0.600"/><rect x="736" y="997" width="8" height="6" fill="#fff" stroke="#2f6fb5" stroke-width="0.800"/><path d="M744 997l2.500-3v6l-2.500 3z" fill="#6cb2e4" stroke="#2f6fb5" stroke-width="0.600"/><rect x="738" y="999" width="4" height="3" fill="#fff" stroke="#555" stroke-width="0.600"/><path d="M759.500 991v11M773.500 991v6" stroke="#444" stroke-width="0.900"/><path d="M760 993.500h13" stroke="#444" stroke-width="0.900"/><path d="M759.500 1001.500h9" stroke="#444" stroke-width="0.900" stroke-dasharray="2 1"/><circle cx="771.5" cy="1000" r="2.8" fill="#5cc6cf"/><path d="M770.5 1002.8h2v1.500h-2z" fill="#777"/></svg>
<div style="left:1551px;top:197px;width:2px;height:811px;background:#bababa;"></div>
<div style="left:1553px;top:197px;width:367px;height:809px;background:#fff;"></div>
<div style="left:1553px;top:197px;width:367px;height:16px;background:#dcdcdc;"></div>
<span class="t" id="t118" style="left:1556.5px;top:197.5px;color:#333;">Project Browser - SSG_Template_2025.rvt</span>
<svg style="left:1909px;top:201px;" width="10" height="10" viewBox="0 0 10 10"><path d="M0.500 0.500L9.500 9.300M9.500 0.500L0.500 9.300" stroke="#666" stroke-width="1.600"/></svg>
<div style="left:1563px;top:222px;width:349px;height:25px;background:#fff;border:1px solid #dcdcdc;box-sizing:border-box;"></div>
<svg style="left:1571px;top:227px;" width="17" height="16" viewBox="0 0 17 16"><circle cx="6.500" cy="6.300" r="5.500" fill="none" stroke="#666" stroke-width="1.200"/><path d="M10.500 10.500L15.500 15" stroke="#666" stroke-width="1.800"/></svg>
<span class="t" id="t119" style="left:1596.5px;top:227.5px;color:#b3bac6;">Search</span>
<span class="t" id="t120" style="left:1597.5px;top:257.5px;color:#1a1a1a;">Views (SSG)</span>
<span class="t" id="t121" style="left:1593.3px;top:277.5px;color:#1a1a1a;">WORKING DRAWINGS</span>
<span class="t" id="t122" style="left:1609.3px;top:297.5px;color:#1a1a1a;">3D View</span>
<div style="left:1555px;top:315.5px;width:347px;height:18.5px;background:#ededed;border-top:1px solid #dadada;border-bottom:1px solid #dadada;box-sizing:border-box;"></div>
<span class="t" id="t123" style="left:1645.5px;top:317.5px;color:#1a1a1a;font-weight:bold;">3D View: {3D}</span>
<span class="t" id="t124" style="left:1609.3px;top:337.5px;color:#1a1a1a;">Elevation</span>
<span class="t" id="t125" style="left:1645.5px;top:357.5px;color:#1a1a1a;">Elevation: Back Elevation</span>
<span class="t" id="t126" style="left:1645.5px;top:377.5px;color:#1a1a1a;">Elevation: Front Elevation</span>
<span class="t" id="t127" style="left:1645.5px;top:397.5px;color:#1a1a1a;">Elevation: Left Elevation</span>
<span class="t" id="t128" style="left:1645.5px;top:417.5px;color:#1a1a1a;">Elevation: Right Elevation</span>
<span class="t" id="t129" style="left:1609.3px;top:437.5px;color:#1a1a1a;">Floor Plan</span>
<span class="t" id="t130" style="left:1645.5px;top:457.5px;color:#1a1a1a;">Floor Plan: Level 1</span>
<span class="t" id="t131" style="left:1597.5px;top:477.5px;color:#1a1a1a;">Legends</span>
<span class="t" id="t132" style="left:1613.5px;top:497.5px;color:#1a1a1a;">*Manage Keynotes</span>
<span class="t" id="t133" style="left:1613.5px;top:517.5px;color:#1a1a1a;">Countertop Legend</span>
<span class="t" id="t134" style="left:1613.5px;top:537.5px;color:#1a1a1a;">Potential Equipment Legend</span>
<span class="t" id="t135" style="left:1613.5px;top:557.5px;color:#1a1a1a;">SSG_Disclaimer</span>
<span class="t" id="t136" style="left:1597.5px;top:577.5px;color:#1a1a1a;">Schedules/Quantities (all)</span>
<span class="t" id="t137" style="left:1597.5px;top:597.5px;color:#1a1a1a;">Sheets (all)</span>
<span class="t" id="t138" style="left:1593.3px;top:617.5px;color:#1a1a1a;">*Admin 01 - Project Information</span>
<span class="t" id="t139" style="left:1593.3px;top:637.5px;color:#1a1a1a;">*Admin 02 - Project Standards</span>
<span class="t" id="t140" style="left:1593.3px;top:657.5px;color:#1a1a1a;">0.0 - Cover Page</span>
<span class="t" id="t141" style="left:1593.3px;top:677.5px;color:#1a1a1a;">1.0 - Room 1</span>
<span class="t" id="t142" style="left:1593.3px;top:697.5px;color:#1a1a1a;">2.0 - Room 2</span>
<span class="t" id="t143" style="left:1597.5px;top:717.5px;color:#1a1a1a;">Families</span>
<span class="t" id="t144" style="left:1593.3px;top:737.5px;color:#1a1a1a;">Analytical Links</span>
<span class="t" id="t145" style="left:1593.3px;top:757.5px;color:#1a1a1a;">Annotation Symbols</span>
<span class="t" id="t146" style="left:1593.3px;top:777.5px;color:#1a1a1a;">Cable Trays</span>
<span class="t" id="t147" style="left:1593.3px;top:797.5px;color:#1a1a1a;">Casework</span>
<span class="t" id="t148" style="left:1593.3px;top:817.5px;color:#1a1a1a;">Ceilings</span>
<span class="t" id="t149" style="left:1593.3px;top:837.5px;color:#1a1a1a;">Columns</span>
<span class="t" id="t150" style="left:1593.3px;top:857.5px;color:#1a1a1a;">Conduits</span>
<span class="t" id="t151" style="left:1593.3px;top:877.5px;color:#1a1a1a;">Curtain Panels</span>
<span class="t" id="t152" style="left:1593.3px;top:897.5px;color:#1a1a1a;">Curtain Systems</span>
<span class="t" id="t153" style="left:1593.3px;top:917.5px;color:#1a1a1a;">Curtain Wall Mullions</span>
<span class="t" id="t154" style="left:1593.3px;top:937.5px;color:#1a1a1a;">Data Devices</span>
<span class="t" id="t155" style="left:1593.3px;top:957.5px;color:#1a1a1a;">Detail Items</span>
<span class="t" id="t156" style="left:1593.3px;top:977.5px;color:#1a1a1a;">Doors</span>
<span class="t" id="t157" style="left:1593.3px;top:997.5px;color:#1a1a1a;">Duct Systems</span>
<svg style="left:1553px;top:255px;overflow:hidden;" width="350" height="751" viewBox="1553 255 350 751"><path d="M1560 265h8" stroke="#555" stroke-width="1.400"/><path d="M1577.5 261v-3.500h3.500M1589 257.5h3.500v3.500M1592.5 269v3.500h-3.500M1581 272.5h-3.500v-3.500" fill="none" stroke="#444" stroke-width="1"/><path d="M1581 263l2-2h6.500v6.500l-2 2h-6.500z" fill="#d8d8d8" stroke="#444" stroke-width="0.900" stroke-linejoin="round"/><path d="M1581 263h6.500v6.500M1587.5 263l2-2" fill="none" stroke="#666" stroke-width="0.700"/><path d="M1576 285h8" stroke="#555" stroke-width="1.400"/><path d="M1592 305h8" stroke="#555" stroke-width="1.400"/><rect x="1625.5" y="317.5" width="15" height="15" fill="none" stroke="#555" stroke-width="1" stroke-dasharray="3 1.5"/><rect x="1628" y="320" width="10" height="10" fill="#fff" stroke="#444" stroke-width="1"/><path d="M1592 345h8" stroke="#555" stroke-width="1.400"/><rect x="1625.5" y="357.5" width="15" height="15" fill="none" stroke="#555" stroke-width="1" stroke-dasharray="3 1.5"/><rect x="1628" y="360" width="10" height="10" fill="#fff" stroke="#444" stroke-width="1"/><rect x="1625.5" y="377.5" width="15" height="15" fill="none" stroke="#555" stroke-width="1" stroke-dasharray="3 1.5"/><rect x="1628" y="380" width="10" height="10" fill="#fff" stroke="#444" stroke-width="1"/><rect x="1625.5" y="397.5" width="15" height="15" fill="none" stroke="#555" stroke-width="1" stroke-dasharray="3 1.5"/><rect x="1628" y="400" width="10" height="10" fill="#fff" stroke="#444" stroke-width="1"/><rect x="1625.5" y="417.5" width="15" height="15" fill="none" stroke="#555" stroke-width="1" stroke-dasharray="3 1.5"/><rect x="1628" y="420" width="10" height="10" fill="#fff" stroke="#444" stroke-width="1"/><path d="M1592 445h8" stroke="#555" stroke-width="1.400"/><rect x="1625.5" y="457.5" width="15" height="15" fill="none" stroke="#555" stroke-width="1" stroke-dasharray="3 1.5"/><rect x="1628" y="460" width="10" height="10" fill="#fff" stroke="#444" stroke-width="1"/><path d="M1560 485h8" stroke="#555" stroke-width="1.400"/><rect x="1577.5" y="477.5" width="15" height="15" fill="#fff" stroke="#444" stroke-width="1"/><rect x="1577" y="477" width="16" height="3" fill="#444"/><path d="M1580 483.5h3M1580 486.5h3M1580 489.5h3M1585 483.5h5M1585 486.5h5M1585 489.5h5" stroke="#444" stroke-width="1.300" stroke-dasharray="1.500 0.800"/><rect x="1593.5" y="497.5" width="15" height="15" fill="none" stroke="#555" stroke-width="1" stroke-dasharray="3 1.5"/><rect x="1596" y="500" width="10" height="10" fill="#fff" stroke="#444" stroke-width="1"/><rect x="1593.5" y="517.5" width="15" height="15" fill="none" stroke="#555" stroke-width="1" stroke-dasharray="3 1.5"/><rect x="1596" y="520" width="10" height="10" fill="#fff" stroke="#444" stroke-width="1"/><rect x="1593.5" y="537.5" width="15" height="15" fill="none" stroke="#555" stroke-width="1" stroke-dasharray="3 1.5"/><rect x="1596" y="540" width="10" height="10" fill="#fff" stroke="#444" stroke-width="1"/><rect x="1593.5" y="557.5" width="15" height="15" fill="none" stroke="#555" stroke-width="1" stroke-dasharray="3 1.5"/><rect x="1596" y="560" width="10" height="10" fill="#5aa9e6" stroke="#444" stroke-width="1"/><path d="M1560 585h8" stroke="#555" stroke-width="1.400"/><path d="M1564 581v8" stroke="#555" stroke-width="1.400"/><rect x="1577.5" y="579.5" width="15" height="11" fill="#fff" stroke="#444" stroke-width="1"/><path d="M1577.5 581h15" stroke="#444" stroke-width="2.500"/><path d="M1577.5 585h15M1577.5 587.8h15M1582.5 582v8.500" stroke="#444" stroke-width="0.900"/><path d="M1560 605h8" stroke="#555" stroke-width="1.400"/><path d="M1577.5 599.5h11l4 4v7h-15z" fill="#fff" stroke="#444" stroke-width="1" stroke-linejoin="round"/><path d="M1588.5 599.5v4h4" fill="none" stroke="#444" stroke-width="0.800"/><path d="M1576 645h8" stroke="#555" stroke-width="1.400"/><path d="M1580 641v8" stroke="#555" stroke-width="1.400"/><path d="M1576 665h8" stroke="#555" stroke-width="1.400"/><path d="M1580 661v8" stroke="#555" stroke-width="1.400"/><path d="M1560 725h8" stroke="#555" stroke-width="1.400"/><path d="M1578.5 718.5h6.500v6h-6.500z" fill="#fff" stroke="#444" stroke-width="1"/><path d="M1587.5 718.5h3.500v12.500h-12.500v-3.500h9z" fill="#fff" stroke="#444" stroke-width="1" stroke-linejoin="round"/><path d="M1576 745h8" stroke="#555" stroke-width="1.400"/><path d="M1580 741v8" stroke="#555" stroke-width="1.400"/><path d="M1576 765h8" stroke="#555" stroke-width="1.400"/><path d="M1580 761v8" stroke="#555" stroke-width="1.400"/><path d="M1576 785h8" stroke="#555" stroke-width="1.400"/><path d="M1580 781v8" stroke="#555" stroke-width="1.400"/><path d="M1576 805h8" stroke="#555" stroke-width="1.400"/><path d="M1580 801v8" stroke="#555" stroke-width="1.400"/><path d="M1576 825h8" stroke="#555" stroke-width="1.400"/><path d="M1580 821v8" stroke="#555" stroke-width="1.400"/><path d="M1576 845h8" stroke="#555" stroke-width="1.400"/><path d="M1580 841v8" stroke="#555" stroke-width="1.400"/><path d="M1576 865h8" stroke="#555" stroke-width="1.400"/><path d="M1580 861v8" stroke="#555" stroke-width="1.400"/><path d="M1576 885h8" stroke="#555" stroke-width="1.400"/><path d="M1580 881v8" stroke="#555" stroke-width="1.400"/><path d="M1576 905h8" stroke="#555" stroke-width="1.400"/><path d="M1580 901v8" stroke="#555" stroke-width="1.400"/><path d="M1576 925h8" stroke="#555" stroke-width="1.400"/><path d="M1580 921v8" stroke="#555" stroke-width="1.400"/><path d="M1576 945h8" stroke="#555" stroke-width="1.400"/><path d="M1580 941v8" stroke="#555" stroke-width="1.400"/><path d="M1576 965h8" stroke="#555" stroke-width="1.400"/><path d="M1580 961v8" stroke="#555" stroke-width="1.400"/><path d="M1576 985h8" stroke="#555" stroke-width="1.400"/><path d="M1580 981v8" stroke="#555" stroke-width="1.400"/><path d="M1576 1005h8" stroke="#555" stroke-width="1.400"/><path d="M1580 1001v8" stroke="#555" stroke-width="1.400"/><path d="M1563.5 275V285" stroke="#9a9a9a" stroke-width="1" stroke-dasharray="2 1.5" fill="none"/><path d="M1563.5 285.5H1573" stroke="#9a9a9a" stroke-width="1" stroke-dasharray="2 1.5" fill="none"/><path d="M1579.5 295V445" stroke="#9a9a9a" stroke-width="1" stroke-dasharray="2 1.5" fill="none"/><path d="M1579.5 305.5H1589" stroke="#9a9a9a" stroke-width="1" stroke-dasharray="2 1.5" fill="none"/><path d="M1579.5 345.5H1589" stroke="#9a9a9a" stroke-width="1" stroke-dasharray="2 1.5" fill="none"/><path d="M1579.5 445.5H1589" stroke="#9a9a9a" stroke-width="1" stroke-dasharray="2 1.5" fill="none"/><path d="M1595.5 315V325" stroke="#9a9a9a" stroke-width="1" stroke-dasharray="2 1.5" fill="none"/><path d="M1595.5 325.5H1622" stroke="#9a9a9a" stroke-width="1" stroke-dasharray="2 1.5" fill="none"/><path d="M1595.5 355V425" stroke="#9a9a9a" stroke-width="1" stroke-dasharray="2 1.5" fill="none"/><path d="M1595.5 365.5H1622" stroke="#9a9a9a" stroke-width="1" stroke-dasharray="2 1.5" fill="none"/><path d="M1595.5 385.5H1622" stroke="#9a9a9a" stroke-width="1" stroke-dasharray="2 1.5" fill="none"/><path d="M1595.5 405.5H1622" stroke="#9a9a9a" stroke-width="1" stroke-dasharray="2 1.5" fill="none"/><path d="M1595.5 425.5H1622" stroke="#9a9a9a" stroke-width="1" stroke-dasharray="2 1.5" fill="none"/><path d="M1595.5 455V465" stroke="#9a9a9a" stroke-width="1" stroke-dasharray="2 1.5" fill="none"/><path d="M1595.5 465.5H1622" stroke="#9a9a9a" stroke-width="1" stroke-dasharray="2 1.5" fill="none"/><path d="M1563.5 495V565" stroke="#9a9a9a" stroke-width="1" stroke-dasharray="2 1.5" fill="none"/><path d="M1563.5 505.5H1590" stroke="#9a9a9a" stroke-width="1" stroke-dasharray="2 1.5" fill="none"/><path d="M1563.5 525.5H1590" stroke="#9a9a9a" stroke-width="1" stroke-dasharray="2 1.5" fill="none"/><path d="M1563.5 545.5H1590" stroke="#9a9a9a" stroke-width="1" stroke-dasharray="2 1.5" fill="none"/><path d="M1563.5 565.5H1590" stroke="#9a9a9a" stroke-width="1" stroke-dasharray="2 1.5" fill="none"/><path d="M1563.5 615V705" stroke="#9a9a9a" stroke-width="1" stroke-dasharray="2 1.5" fill="none"/><path d="M1563.5 625.5H1590" stroke="#9a9a9a" stroke-width="1" stroke-dasharray="2 1.5" fill="none"/><path d="M1563.5 685.5H1590" stroke="#9a9a9a" stroke-width="1" stroke-dasharray="2 1.5" fill="none"/><path d="M1563.5 705.5H1590" stroke="#9a9a9a" stroke-width="1" stroke-dasharray="2 1.5" fill="none"/><path d="M1563.5 645.5H1573" stroke="#9a9a9a" stroke-width="1" stroke-dasharray="2 1.5" fill="none"/><path d="M1563.5 665.5H1573" stroke="#9a9a9a" stroke-width="1" stroke-dasharray="2 1.5" fill="none"/><path d="M1563.5 735V1008" stroke="#9a9a9a" stroke-width="1" stroke-dasharray="2 1.5" fill="none"/><path d="M1563.5 745.5H1573" stroke="#9a9a9a" stroke-width="1" stroke-dasharray="2 1.5" fill="none"/><path d="M1563.5 765.5H1573" stroke="#9a9a9a" stroke-width="1" stroke-dasharray="2 1.5" fill="none"/><path d="M1563.5 785.5H1573" stroke="#9a9a9a" stroke-width="1" stroke-dasharray="2 1.5" fill="none"/><path d="M1563.5 805.5H1573" stroke="#9a9a9a" stroke-width="1" stroke-dasharray="2 1.5" fill="none"/><path d="M1563.5 825.5H1573" stroke="#9a9a9a" stroke-width="1" stroke-dasharray="2 1.5" fill="none"/><path d="M1563.5 845.5H1573" stroke="#9a9a9a" stroke-width="1" stroke-dasharray="2 1.5" fill="none"/><path d="M1563.5 865.5H1573" stroke="#9a9a9a" stroke-width="1" stroke-dasharray="2 1.5" fill="none"/><path d="M1563.5 885.5H1573" stroke="#9a9a9a" stroke-width="1" stroke-dasharray="2 1.5" fill="none"/><path d="M1563.5 905.5H1573" stroke="#9a9a9a" stroke-width="1" stroke-dasharray="2 1.5" fill="none"/><path d="M1563.5 925.5H1573" stroke="#9a9a9a" stroke-width="1" stroke-dasharray="2 1.5" fill="none"/><path d="M1563.5 945.5H1573" stroke="#9a9a9a" stroke-width="1" stroke-dasharray="2 1.5" fill="none"/><path d="M1563.5 965.5H1573" stroke="#9a9a9a" stroke-width="1" stroke-dasharray="2 1.5" fill="none"/><path d="M1563.5 985.5H1573" stroke="#9a9a9a" stroke-width="1" stroke-dasharray="2 1.5" fill="none"/><path d="M1563.5 1005.5H1573" stroke="#9a9a9a" stroke-width="1" stroke-dasharray="2 1.5" fill="none"/></svg>
<div style="left:1902px;top:255px;width:18px;height:751px;background:#e8e8e8;"></div>
<div style="left:1902px;top:272px;width:18px;height:1px;background:#d2d2d2;"></div>
<div style="left:1902px;top:989px;width:18px;height:1px;background:#d2d2d2;"></div>
<svg style="left:1906.5px;top:260px;" width="9" height="6" viewBox="0 0 9 6"><path d="M0.500 5L4.500 1L8.500 5" fill="none" stroke="#8a8a8a" stroke-width="1.600"/></svg>
<svg style="left:1906.5px;top:995.5px;" width="9" height="6" viewBox="0 0 9 6"><path d="M0.500 0.800L4.500 4.800L8.500 0.800" fill="none" stroke="#7a7a7a" stroke-width="1.600"/></svg>
<div style="left:1907px;top:277.5px;width:8px;height:432px;background:#8b8b8b;border-radius:4px;"></div>
<div style="left:1553px;top:1006px;width:367px;height:2px;background:#eeeeee;"></div>
<div style="left:0px;top:1008px;width:1920px;height:23px;background:#f4f4f4;"></div>
<div style="left:0px;top:1031px;width:1920px;height:1px;background:#fdfdfd;"></div>
<div style="left:0px;top:1032px;width:1920px;height:8px;background:#17263f;"></div>
<span class="t" id="t158" style="left:2px;top:1012.5px;color:#222;">Click to select, TAB for alternates, CTRL adds, SHIFT unselects.</span>
<svg style="left:0px;top:1008px;" width="1920" height="24" viewBox="0 1008 1920 24"><path d="M896 1014l3-1.500 3 1.500v9l-3 1.500-3-1.500z" fill="#3b8fd0" stroke="#1d5f9a" stroke-width="0.600"/><path d="M900 1016l3-1.500 2.500 1.500v8l-2.500 1.500-3-1.500z" fill="#e07a3a" stroke="#a04f1a" stroke-width="0.600"/><path d="M904 1018l3-1 2 1.500v6l-2 1.500-3-1.500z" fill="#4cb868" stroke="#2f8f49" stroke-width="0.600"/><path d="M903 1026l4-4" stroke="#3b8fd0" stroke-width="1.600"/><path d="M1115 1020l3 3 3-3" fill="none" stroke="#b8b8b8" stroke-width="1.300"/><circle cx="1140" cy="1019.500" r="2.200" fill="none" stroke="#999" stroke-width="1"/><path d="M1135.500 1027v-2.500l2-1.500h5l1.500 1.500v2.500z" fill="none" stroke="#999" stroke-width="1"/><path d="M1142.500 1013.500h6v4h-3l-1.500 1.500v-1.500h-1.500z" fill="none" stroke="#999" stroke-width="0.900"/><rect x="1186.500" y="1013" width="15" height="15" fill="#fff" stroke="#222" stroke-width="1.200"/><path d="M1186 1014.200h16" stroke="#222" stroke-width="2.400"/><path d="M1189 1018.500h1.500M1192 1018.500h7M1189 1021.500h1.500M1192 1021.500h7M1189 1024.500h1.500M1192 1024.500h7" stroke="#222" stroke-width="1.100"/><rect x="1215.500" y="1012.500" width="12" height="12" fill="#fafafa" stroke="#999" stroke-width="1"/><path d="M1217.500 1015.500h8M1217.500 1018h8M1217.500 1020.500h8" stroke="#999" stroke-width="0.900"/><path d="M1213 1025.500h8M1218.500 1022.500v6" stroke="#999" stroke-width="1"/><path d="M1431 1020l3 3 3-3" fill="none" stroke="#b8b8b8" stroke-width="1.300"/><path d="M1667.500 1013h4a2 2 0 0 1 0 4h-4a2 2 0 0 1 0-4zM1672.500 1013h4a2 2 0 0 1 0 4h-4" fill="none" stroke="#e08a3a" stroke-width="1.100"/><path d="M1694 1022l6-8v8z" fill="#4e9ad6"/><path d="M1703 1012.500l4.500 4.500M1707.500 1012.500l-4.500 4.500" stroke="#e81123" stroke-width="1.500"/><path d="M1721.500 1013.500h5v4h-2v6M1720 1016.500h2" fill="none" stroke="#444" stroke-width="1"/><path d="M1746.500 1016l6-3v12l-6 3z" fill="#4e9ad6" stroke="#2f6fb5" stroke-width="0.500"/><path d="M1756 1012.500l4.500 4.500M1760.500 1012.500l-4.500 4.500" stroke="#e81123" stroke-width="1.500"/><path d="M1777.500 1012v11M1772 1018.500h8" stroke="#222" stroke-width="1.100"/><path d="M1775.800 1014l1.700-2.500 1.700 2.500zM1773.500 1016.800l-2.500 1.700 2.500 1.700z" fill="#222"/><path d="M1674.5 1018v9l2-1.800 1.500 3.300 1.600-0.700-1.500-3.200h2.800z" fill="#fff" stroke="#222" stroke-width="0.900" stroke-linejoin="round"/><path d="M1700.5 1018v9l2-1.800 1.500 3.300 1.600-0.700-1.500-3.200h2.800z" fill="#fff" stroke="#222" stroke-width="0.900" stroke-linejoin="round"/><path d="M1726.5 1018v9l2-1.800 1.500 3.300 1.600-0.700-1.500-3.200h2.800z" fill="#fff" stroke="#222" stroke-width="0.900" stroke-linejoin="round"/><path d="M1753.5 1018v9l2-1.800 1.500 3.300 1.600-0.700-1.500-3.200h2.800z" fill="#fff" stroke="#222" stroke-width="0.900" stroke-linejoin="round"/><path d="M1780.5 1018v9l2-1.800 1.500 3.300 1.600-0.700-1.500-3.200h2.800z" fill="#fff" stroke="#222" stroke-width="0.900" stroke-linejoin="round"/><circle cx="1810.5" cy="1020.0" r="1.300" fill="#d0d0d0"/><circle cx="1809.4" cy="1023.5" r="1.300" fill="#d0d0d0"/><circle cx="1806.4" cy="1025.7" r="1.300" fill="#d0d0d0"/><circle cx="1802.6" cy="1025.7" r="1.300" fill="#d0d0d0"/><circle cx="1799.6" cy="1023.5" r="1.300" fill="#d0d0d0"/><circle cx="1798.5" cy="1020.0" r="1.300" fill="#d0d0d0"/><circle cx="1799.6" cy="1016.5" r="1.300" fill="#d0d0d0"/><circle cx="1802.6" cy="1014.3" r="1.300" fill="#d0d0d0"/><circle cx="1806.4" cy="1014.3" r="1.300" fill="#d0d0d0"/><circle cx="1809.4" cy="1016.5" r="1.300" fill="#d0d0d0"/><path d="M1821.500 1014h13l-5 6v6.500l-3 1.500v-8z" fill="#fafafa" stroke="#555" stroke-width="1.100" stroke-linejoin="round"/></svg>
<span class="t" id="t159" style="left:1147.5px;top:1013.5px;color:#999;">:0</span>
<span class="t" id="t160" style="left:1239.5px;top:1014px;color:#9a9a9a;">Main Model</span>
<span class="t" id="t161" style="left:1837.5px;top:1013.5px;color:#666;">:1</span>
</body></html>
